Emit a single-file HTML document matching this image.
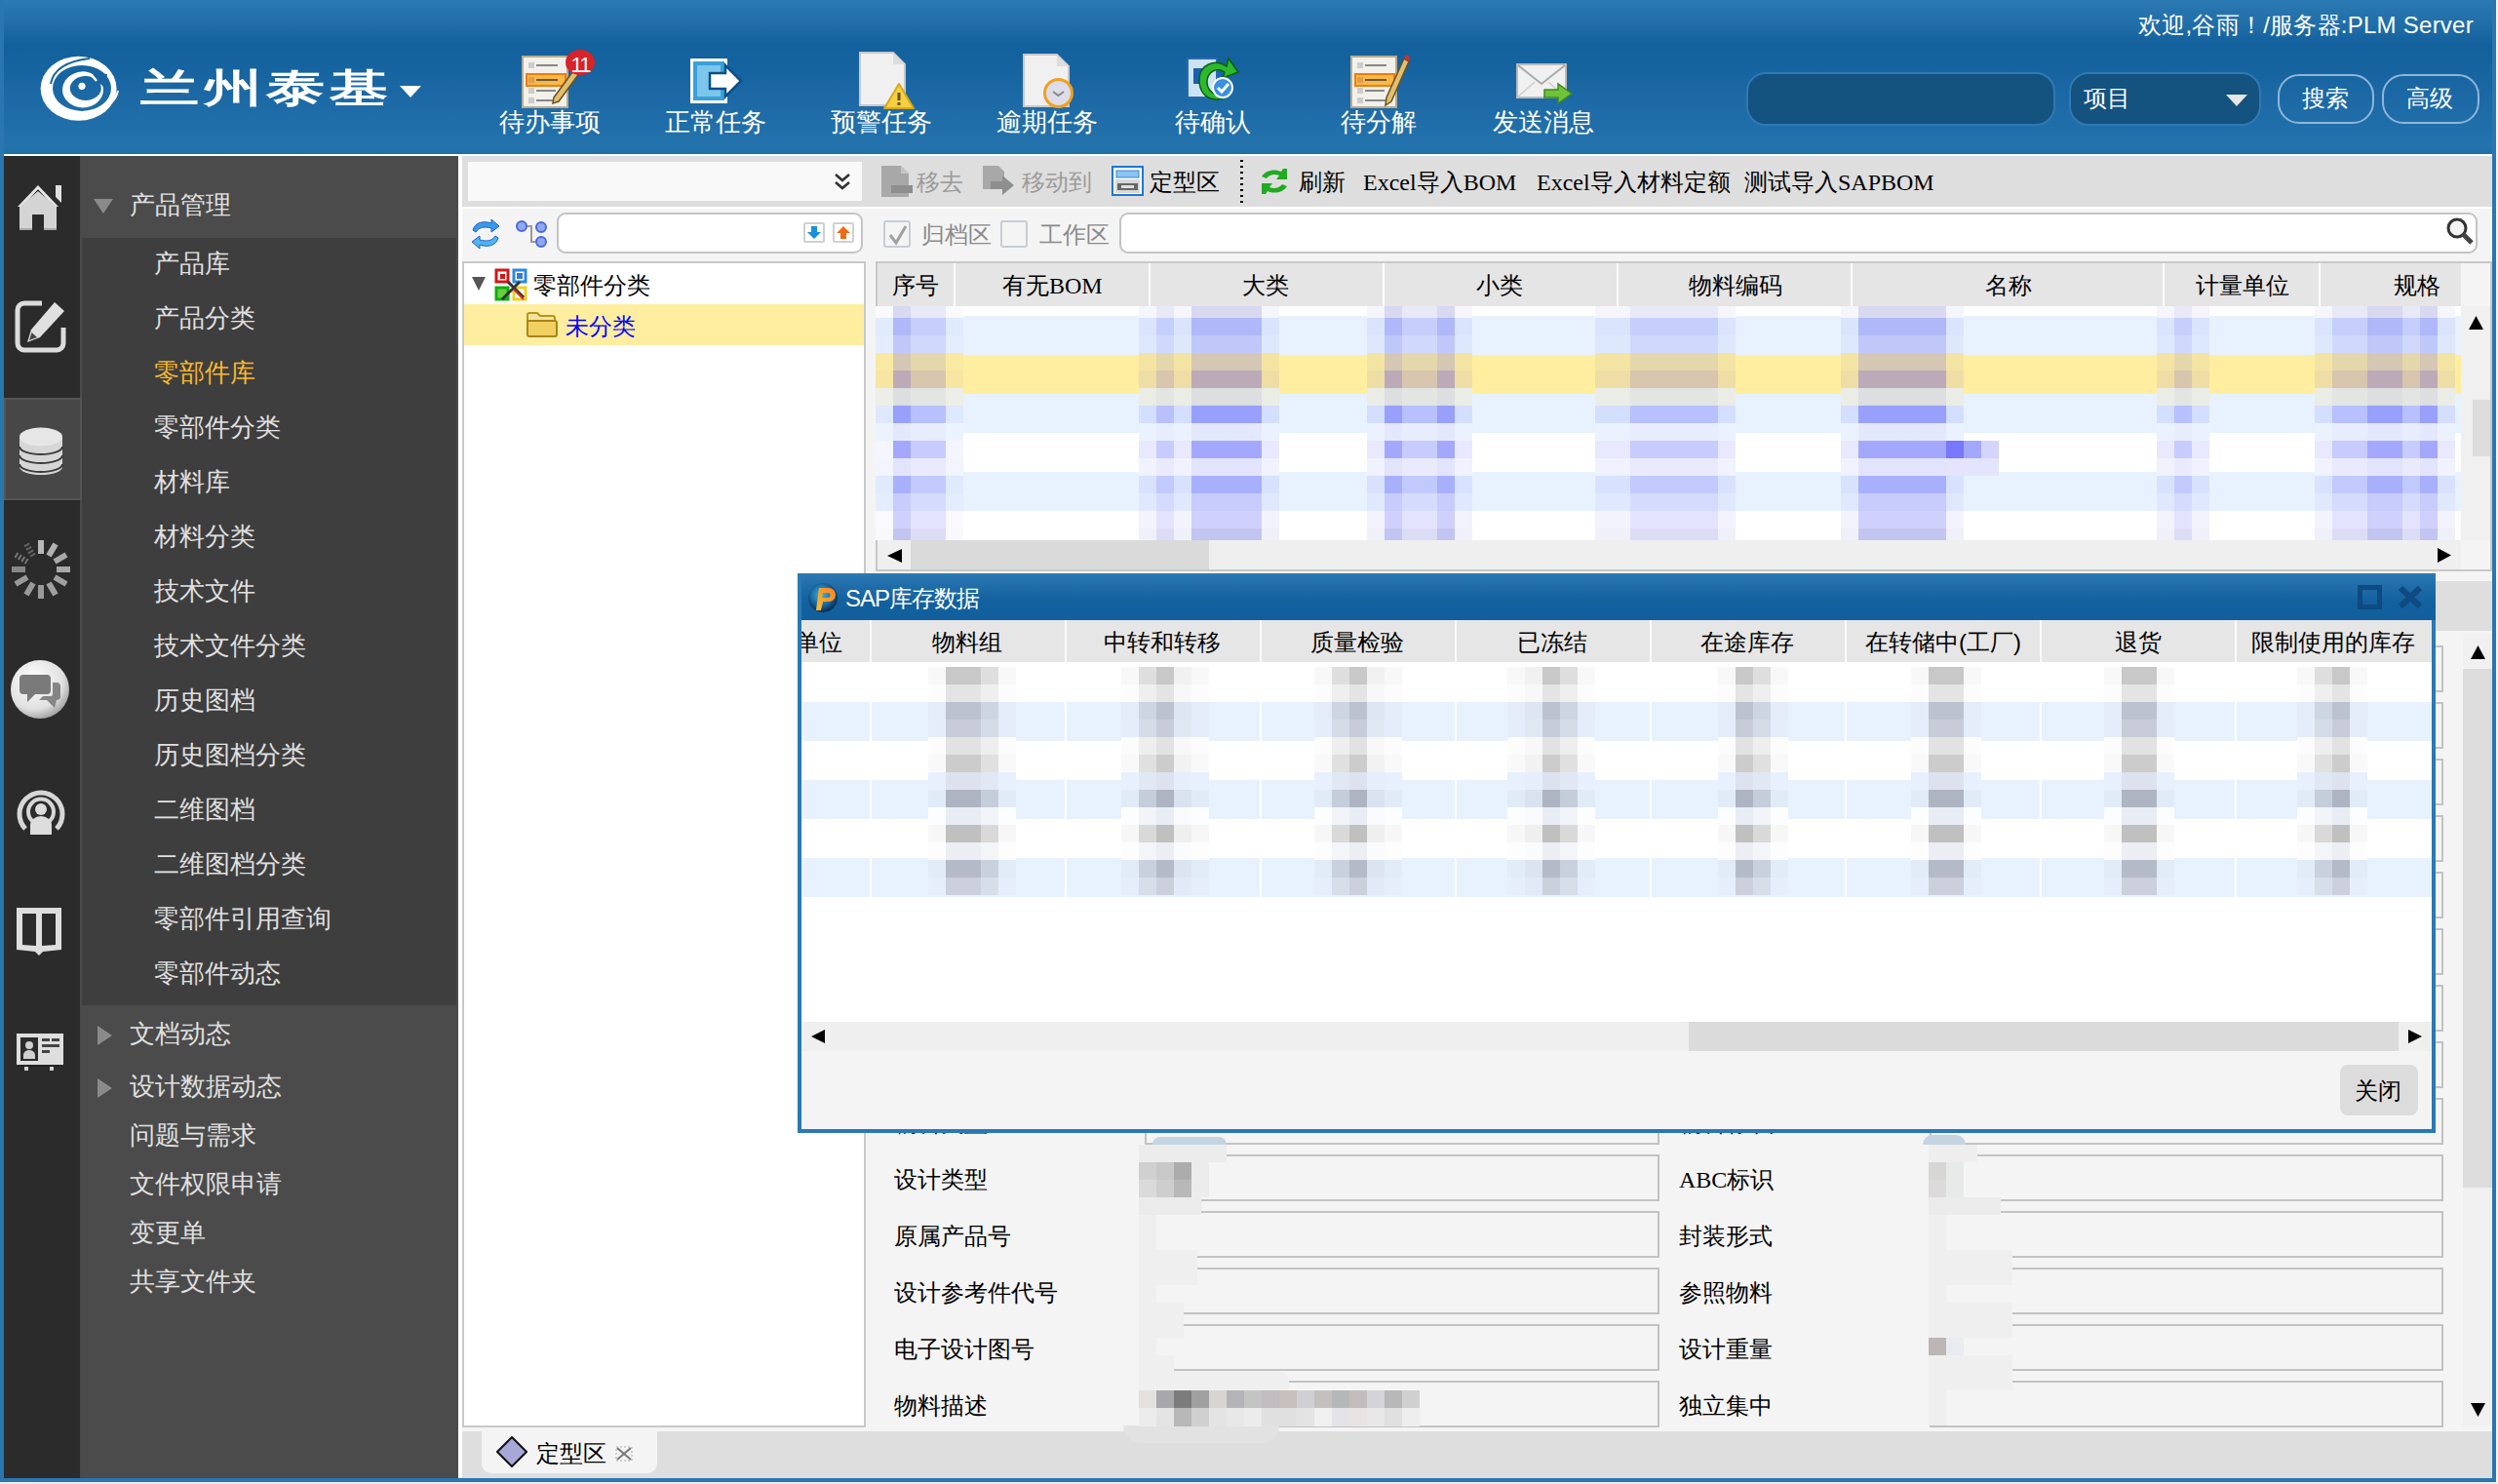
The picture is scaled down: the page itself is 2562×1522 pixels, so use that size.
<!DOCTYPE html>
<html><head><meta charset="utf-8">
<style>
*{box-sizing:border-box;margin:0;padding:0}
html,body{width:2562px;height:1522px;overflow:hidden;background:#2a76b0}
body{font-family:"Liberation Sans",sans-serif;position:relative}
.a{position:absolute}
.t{position:absolute;white-space:nowrap;line-height:1}
/* header */
#hdr{left:4px;top:0;width:2552px;height:158px;background:linear-gradient(#2b79b2 0px,#1f6ca7 28px,#12609c 46px,#14629e 62px,#1c69a5 100px,#2473ad 150px,#1f6fa9 157px)}
.hl{color:#fff;font-size:26px}
/* sidebar */
#icol{left:4px;top:160px;width:78px;height:1356px;background:#2b2b2b}
#icdiv{left:82px;top:160px;width:2px;height:1356px;background:#4a4a4a}
#menu{left:84px;top:160px;width:386px;height:1356px;background:#4b4b4b}
.mi{color:#e0e0e0;font-size:26px}
.tb{font-size:24px;margin-top:1px}
.tg{font-size:24px;color:#000;margin-top:1px}
</style></head><body>
<div id="hdr" class="a"></div>
<div class="a" style="left:4px;top:158px;width:2552px;height:2px;background:#fff"></div>
<div class="a" style="left:0;top:0;width:4px;height:1520px;background:#2a76b0"></div>
<div class="a" style="left:2556px;top:0;width:4px;height:1522px;background:#2a76b0"></div>
<div class="a" style="left:0;top:1516px;width:2562px;height:4px;background:#2a76b0"></div>
<div class="a" style="left:0;top:1520px;width:2562px;height:2px;background:#f2f0ec"></div>
<div class="a" style="left:2560px;top:0;width:2px;height:1520px;background:#f4f4f4"></div>


<!-- header content -->
<svg class="a" style="left:36px;top:52px" width="92" height="76" viewBox="36 52 92 76">
 <path fill-rule="evenodd" fill="#fff" d="M41.6 90.8 A39 33 0 1 0 119.6 90.8 A39 33 0 1 0 41.6 90.8 Z M54 90.4 A30 23.5 0 1 0 114 90.4 A30 23.5 0 1 0 54 90.4 Z"/>
 <path fill="none" stroke="#1864a0" stroke-width="2" d="M52 86 Q56 64 92 60"/>
 <path fill="none" stroke="#fff" stroke-width="2" d="M121 93 Q118 108 100 112"/>
 <path fill-rule="evenodd" fill="#fff" d="M64 92 A21 18.5 0 1 0 106 92 A21 18.5 0 1 0 64 92 Z M71.8 90.5 A16 12.5 0 1 0 103.8 90.5 A16 12.5 0 1 0 71.8 90.5 Z"/>
 <path fill="#1864a0" d="M94 74 L110 76 L108 90 L100 84 Z"/>
 <path fill="none" stroke="#fff" stroke-width="2.2" d="M76 77 Q90 70 99 83"/>
 <circle cx="84" cy="88.3" r="3.6" fill="#fff"/>
</svg>
<div class="t" style="left:144px;top:70px;color:#fff;font-size:40px;font-weight:bold;transform:scaleX(1.5);transform-origin:0 0;letter-spacing:3px">兰州泰基</div>
<svg class="a" style="left:410px;top:88px" width="22" height="12"><path d="M0 0H22L11 12Z" fill="#fff"/></svg>

<!-- toolbar icons -->
<svg class="a" style="left:534px;top:48px" width="80" height="64" viewBox="0 0 80 64">
 <rect x="2" y="10" width="46" height="52" fill="#f2f0ea" stroke="#b9ab8c" stroke-width="2"/>
 <rect x="8" y="16" width="6" height="6" fill="#ccc"/><rect x="16" y="18" width="22" height="2" fill="#888"/>
 <rect x="6" y="28" width="40" height="12" fill="#f9b84a" stroke="#f07d0a" stroke-width="2"/>
 <rect x="8" y="31" width="6" height="6" fill="#d9a050"/><rect x="16" y="33" width="22" height="2" fill="#6b5a3a"/>
 <rect x="8" y="42" width="6" height="6" fill="#ccc"/><rect x="16" y="44" width="20" height="2" fill="#888"/>
 <rect x="8" y="52" width="6" height="6" fill="#ccc"/><rect x="16" y="54" width="22" height="2" fill="#888"/>
 <path d="M34 52 L56 22 L61 26 L39 56 L33 58 Z" fill="#e0c070" stroke="#6b5020" stroke-width="1.5"/>
 <ellipse cx="61" cy="16" rx="15" ry="13" fill="#d8232a"/>
 <text x="61" y="26" font-family="Liberation Sans" font-size="22" fill="#fff" text-anchor="middle" letter-spacing="-2">11</text>
</svg>
<svg class="a" style="left:706px;top:58px" width="58" height="50" viewBox="0 0 58 50">
 <rect x="2" y="2" width="38" height="46" fill="#fff"/>
 <rect x="5" y="5" width="32" height="40" fill="#39a0d8"/>
 <rect x="9" y="9" width="24" height="32" fill="#7cc6ec"/>
 <path d="M22 17 H38 V9 L54 25 L38 41 V33 H22 Z" fill="#fff" stroke="#0a4f8a" stroke-width="2.5"/>
</svg>
<svg class="a" style="left:880px;top:52px" width="60" height="62" viewBox="0 0 60 62">
 <path d="M2 2 H36 L48 14 V56 H2 Z" fill="#f0f0f0" stroke="#c8c8c8" stroke-width="2"/>
 <path d="M36 2 V14 H48 Z" fill="#dcdcdc"/>
 <path d="M42 34 L57 59 H27 Z" fill="#f5d040" stroke="#d8a818" stroke-width="2" stroke-linejoin="round"/>
 <rect x="40.5" y="43" width="3" height="8" fill="#6a5010"/><rect x="40.5" y="53" width="3" height="3" fill="#6a5010"/>
</svg>
<svg class="a" style="left:1048px;top:54px" width="58" height="60" viewBox="0 0 58 60">
 <path d="M2 2 H36 L48 14 V55 H2 Z" fill="#f0f0f0" stroke="#c8c8c8" stroke-width="2"/>
 <path d="M36 2 V14 H48 Z" fill="#dcdcdc"/>
 <circle cx="37.5" cy="41.5" r="14" fill="#dcdde8" stroke="#f0a020" stroke-width="3"/>
 <path d="M32 40 L37.5 44 L43 40" fill="none" stroke="#888" stroke-width="2"/>
</svg>
<svg class="a" style="left:1216px;top:56px" width="56" height="54" viewBox="0 0 56 54">
 <rect x="2" y="4" width="30" height="40" fill="#cde3f5" stroke="#2a6bb0" stroke-width="2"/>
 <rect x="8" y="14" width="12" height="16" fill="#1a5fb0"/>
 <path d="M14 26 C14 10 30 4 42 12 L44 4 L54 18 L38 24 L40 18 C32 12 22 18 22 28 C22 40 36 46 46 38 C40 50 14 50 14 26 Z" fill="#2db82d" stroke="#0a6010" stroke-width="1.5"/>
 <circle cx="38" cy="34" r="10" fill="#3a8fe0" stroke="#fff" stroke-width="2"/>
 <path d="M33 34 L37 38 L44 30" fill="none" stroke="#fff" stroke-width="3"/>
</svg>
<svg class="a" style="left:1382px;top:52px" width="66" height="60" viewBox="0 0 66 60">
 <rect x="4" y="6" width="46" height="52" fill="#f2f0ea" stroke="#b9ab8c" stroke-width="2"/>
 <rect x="10" y="12" width="6" height="6" fill="#ccc"/><rect x="18" y="14" width="22" height="2" fill="#888"/>
 <rect x="8" y="24" width="40" height="12" fill="#f9b84a" stroke="#f07d0a" stroke-width="2"/>
 <rect x="10" y="27" width="6" height="6" fill="#d9a050"/><rect x="18" y="29" width="22" height="2" fill="#6b5a3a"/>
 <rect x="10" y="38" width="6" height="6" fill="#ccc"/><rect x="18" y="40" width="20" height="2" fill="#888"/>
 <rect x="10" y="48" width="6" height="6" fill="#ccc"/><rect x="18" y="50" width="22" height="2" fill="#888"/>
 <path d="M40 48 L58 8 L63 11 L45 52 L39 56 Z" fill="#e0c070" stroke="#6b5020" stroke-width="1.5"/>
 <path d="M58 8 L63 11 L64 6 L60 4 Z" fill="#d03030"/>
</svg>
<svg class="a" style="left:1554px;top:62px" width="60" height="48" viewBox="0 0 60 48">
 <rect x="2" y="4" width="50" height="34" fill="#f0f0f0" stroke="#bbb" stroke-width="2"/>
 <path d="M3 5 L27 24 L51 5" fill="none" stroke="#aaa" stroke-width="2"/>
 <path d="M3 37 L20 22 M51 37 L34 22" fill="none" stroke="#ccc" stroke-width="1.5"/>
 <path d="M30 30 H44 V24 L58 34 L44 44 V38 H30 Z" fill="#6ec23a" stroke="#3c8a18" stroke-width="1.5"/>
</svg>
<div class="t hl" style="left:512px;top:112px">待办事项</div>
<div class="t hl" style="left:682px;top:112px">正常任务</div>
<div class="t hl" style="left:852px;top:112px">预警任务</div>
<div class="t hl" style="left:1022px;top:112px">逾期任务</div>
<div class="t hl" style="left:1205px;top:112px">待确认</div>
<div class="t hl" style="left:1375px;top:112px">待分解</div>
<div class="t hl" style="left:1531px;top:112px">发送消息</div>

<div class="t" style="left:2193px;top:14px;color:#fff;font-size:24px;letter-spacing:0.25px">欢迎,谷雨！/服务器:PLM Server</div>
<div class="a" style="left:1791px;top:74px;width:317px;height:55px;border-radius:20px;background:#14527f;border:2px solid #2f7ab5"></div>
<div class="a" style="left:2122px;top:74px;width:197px;height:55px;border-radius:20px;background:#14527f;border:2px solid #2f7ab5"></div>
<div class="t hl" style="left:2137px;top:89px;font-size:24px">项目</div>
<svg class="a" style="left:2283px;top:97px" width="22" height="12"><path d="M0 0H22L11 12Z" fill="#e6e6e6"/></svg>
<div class="a" style="left:2336px;top:76px;width:99px;height:51px;border-radius:22px;border:2px solid #8fb6d8"></div>
<div class="a" style="left:2443px;top:76px;width:100px;height:51px;border-radius:22px;border:2px solid #8fb6d8"></div>
<div class="t hl" style="left:2361px;top:89px;font-size:24px">搜索</div>
<div class="t hl" style="left:2468px;top:89px;font-size:24px">高级</div>

<!-- sidebar -->
<div id="icol" class="a"></div>
<div id="icdiv" class="a"></div>
<div id="menu" class="a"></div>
<div class="a" style="left:84px;top:244px;width:384px;height:787px;background:#3e3e3e"></div>
<div class="a" style="left:4px;top:408px;width:80px;height:105px;background:#474747;border:2px solid #555"></div>


<!-- sidebar icons -->
<svg class="a" style="left:14px;top:184px" width="54" height="56" viewBox="0 0 54 56">
 <path d="M4 28 L25 6 L46 28 Z" fill="#e6e6e6"/>
 <path d="M10 28 L25 12 L40 28" fill="none" stroke="#1a1a1a" stroke-width="2.5"/>
 <path d="M43 6 H49 V24 L43 18 Z" fill="#e0e0e0"/>
 <path d="M6 28 L25 12 L44 28 V52 H31 V36 H19 V52 H6 Z" fill="#d4d4d4"/>
 <path d="M6 50 H19 V52 H6 Z M31 50 H44 V52 H31 Z" fill="#aaa"/>
</svg>
<svg class="a" style="left:15px;top:306px" width="54" height="56" viewBox="0 0 54 56">
 <path d="M28 5 H10 A7 7 0 0 0 3 12 V46 A7 7 0 0 0 10 53 H43 A7 7 0 0 0 50 46 V30" fill="none" stroke="#dcdcdc" stroke-width="5"/>
 <path d="M41 4 L51 13 L26 40 L13 45 L17 32 Z" fill="#e0e0e0"/>
 <path d="M15 43 L17.5 35 L23 40 Z" fill="#444"/>
</svg>
<svg class="a" style="left:17px;top:436px" width="50" height="54" viewBox="0 0 50 54">
 <path d="M3 12 V43 A22 8 0 0 0 47 43 V12 Z" fill="#d6d6d6"/>
 <path d="M3 22 A22 8 0 0 0 47 22 M3 31 A22 8 0 0 0 47 31 M3 40 A22 8 0 0 0 47 40" fill="none" stroke="#3c3c3c" stroke-width="2"/>
 <ellipse cx="25" cy="12" rx="22" ry="9.5" fill="#e6e6e6"/>
</svg>
<svg class="a" style="left:8px;top:550px" width="68" height="68" viewBox="0 0 68 68">
 <g stroke-width="6" stroke-linecap="butt">
 <line x1="34" y1="4" x2="34" y2="18" stroke="#b8b8b8"/>
 <line x1="49" y1="8" x2="42" y2="20" stroke="#b0b0b0"/>
 <line x1="60" y1="19" x2="48" y2="26" stroke="#a8a8a8"/>
 <line x1="64" y1="34" x2="50" y2="34" stroke="#a8a8a8"/>
 <line x1="60" y1="49" x2="48" y2="42" stroke="#a0a0a0"/>
 <line x1="49" y1="60" x2="42" y2="48" stroke="#a0a0a0"/>
 <line x1="34" y1="64" x2="34" y2="50" stroke="#999"/>
 <line x1="19" y1="60" x2="26" y2="48" stroke="#999"/>
 <line x1="8" y1="49" x2="20" y2="42" stroke="#999"/>
 <line x1="4" y1="34" x2="18" y2="34" stroke="#888"/>
 <line x1="8" y1="19" x2="20" y2="26" stroke="#777" stroke-dasharray="2 2"/>
 <line x1="19" y1="8" x2="26" y2="20" stroke="#666" stroke-dasharray="2 2"/>
 </g>
</svg>
<svg class="a" style="left:10px;top:676px" width="62" height="62" viewBox="0 0 62 62">
 <defs><radialGradient id="cg" cx="0.4" cy="0.35" r="0.7"><stop offset="0" stop-color="#fff"/><stop offset="0.7" stop-color="#e0e0e0"/><stop offset="1" stop-color="#9a9a9a"/></radialGradient></defs>
 <circle cx="31" cy="31" r="30" fill="url(#cg)"/>
 <path d="M14 16 H38 A4 4 0 0 1 42 20 V32 A4 4 0 0 1 38 36 H26 L18 44 V36 H14 A4 4 0 0 1 10 32 V20 A4 4 0 0 1 14 16 Z" fill="#7a7a7a"/>
 <path d="M44 24 H48 A4 4 0 0 1 52 28 V38 A4 4 0 0 1 48 42 L46 50 L38 42 H30 L34 38 H42 A2 2 0 0 0 44 36 Z" fill="#858585"/>
</svg>
<svg class="a" style="left:16px;top:806px" width="52" height="52" viewBox="0 0 52 52">
 <path d="M10 44 A22 22 0 1 1 42 44" fill="none" stroke="#d6d6d6" stroke-width="5"/>
 <path d="M17 36 A13 13 0 1 1 35 36" fill="none" stroke="#d6d6d6" stroke-width="4"/>
 <circle cx="26" cy="24" r="6" fill="#dcdcdc"/>
 <path d="M15 50 V40 A11 9 0 0 1 37 40 V50 Z" fill="#dcdcdc"/>
</svg>
<svg class="a" style="left:15px;top:928px" width="52" height="54" viewBox="0 0 52 54">
 <path d="M2 3 H48 V46 L29 48 L25 52 L21 48 L2 46 Z" fill="#dedede"/>
 <path d="M8 9 H22 V42 L8 41 Z M28 9 H42 V41 L28 42 Z" fill="#2b2b2b"/>
</svg>
<svg class="a" style="left:15px;top:1058px" width="52" height="42" viewBox="0 0 52 42">
 <rect x="2" y="2" width="48" height="32" fill="#dedede"/>
 <rect x="6" y="6" width="18" height="24" fill="#2b2b2b"/>
 <circle cx="15" cy="14" r="4" fill="#cfcfcf"/><path d="M9 28 V24 A6 5 0 0 1 21 24 V28 Z" fill="#cfcfcf"/>
 <rect x="28" y="7" width="8" height="3" fill="#444"/><rect x="38" y="7" width="8" height="3" fill="#444"/>
 <rect x="28" y="13" width="18" height="3" fill="#444"/><rect x="28" y="19" width="8" height="3" fill="#444"/>
 <rect x="10" y="34" width="4" height="6" fill="#d0d0d0"/><rect x="36" y="34" width="4" height="6" fill="#d0d0d0"/>
 <rect x="6" y="34" width="40" height="2" fill="#222"/>
</svg>

<!-- menu -->
<svg class="a" style="left:96px;top:204px" width="20" height="15"><path d="M0 0H20L10 15Z" fill="#8a8a8a"/></svg>
<div class="t mi" style="left:133px;top:197px">产品管理</div>
<div class="t mi" style="left:158px;top:257px">产品库</div>
<div class="t mi" style="left:158px;top:313px">产品分类</div>
<div class="t mi" style="left:158px;top:369px;color:#f9b92e">零部件库</div>
<div class="t mi" style="left:158px;top:425px">零部件分类</div>
<div class="t mi" style="left:158px;top:481px">材料库</div>
<div class="t mi" style="left:158px;top:537px">材料分类</div>
<div class="t mi" style="left:158px;top:593px">技术文件</div>
<div class="t mi" style="left:158px;top:649px">技术文件分类</div>
<div class="t mi" style="left:158px;top:705px">历史图档</div>
<div class="t mi" style="left:158px;top:761px">历史图档分类</div>
<div class="t mi" style="left:158px;top:817px">二维图档</div>
<div class="t mi" style="left:158px;top:873px">二维图档分类</div>
<div class="t mi" style="left:158px;top:929px">零部件引用查询</div>
<div class="t mi" style="left:158px;top:985px">零部件动态</div>
<svg class="a" style="left:100px;top:1052px" width="15" height="20"><path d="M0 0V20L15 10Z" fill="#8a8a8a"/></svg>
<div class="t mi" style="left:133px;top:1047px">文档动态</div>
<svg class="a" style="left:100px;top:1106px" width="15" height="20"><path d="M0 0V20L15 10Z" fill="#8a8a8a"/></svg>
<div class="t mi" style="left:133px;top:1101px">设计数据动态</div>
<div class="t mi" style="left:133px;top:1151px">问题与需求</div>
<div class="t mi" style="left:133px;top:1201px">文件权限申请</div>
<div class="t mi" style="left:133px;top:1251px">变更单</div>
<div class="t mi" style="left:133px;top:1301px">共享文件夹</div>

<!-- content -->
<div class="a" style="left:470px;top:160px;width:4px;height:1356px;background:#fff"></div>
<div class="a" style="left:474px;top:160px;width:2082px;height:52px;background:#dedede"></div>
<div class="a" style="left:474px;top:212px;width:2082px;height:2px;background:#fff"></div>
<div class="a" style="left:474px;top:214px;width:2082px;height:1254px;background:#f4f4f4"></div>
<div class="a" style="left:474px;top:1468px;width:2082px;height:48px;background:#dedede"></div>

<!-- toolbar row1 -->
<div class="a" style="left:480px;top:166px;width:404px;height:40px;background:#f9f9f9"></div>
<svg class="a" style="left:854px;top:176px" width="20" height="20" viewBox="0 0 20 20"><path d="M3 3 L10 9 L17 3 M3 11 L10 17 L17 11" fill="none" stroke="#333" stroke-width="2.6"/></svg>
<svg class="a" style="left:902px;top:168px" width="34" height="36" viewBox="0 0 34 36">
 <path d="M2 2 H22 L30 10 V34 H2 Z" fill="#a8a8a8"/><path d="M22 2 V10 H30" fill="#c4c4c4"/>
 <rect x="12" y="22" width="22" height="8" fill="#8e8e8e"/>
</svg>
<div class="t tb" style="left:940px;top:174px;color:#9a9a9a">移去</div>
<svg class="a" style="left:1006px;top:168px" width="36" height="36" viewBox="0 0 36 36">
 <path d="M2 2 H18 L24 8 V26 H2 Z" fill="#a8a8a8"/>
 <path d="M10 18 H22 V12 L34 22 L22 32 V26 H10 Z" fill="#8e8e8e"/>
</svg>
<div class="t tb" style="left:1048px;top:174px;color:#9a9a9a">移动到</div>
<svg class="a" style="left:1140px;top:170px" width="33" height="31" viewBox="0 0 33 31">
 <rect x="1" y="1" width="31" height="29" fill="#fff" stroke="#1e78d0" stroke-width="2"/>
 <rect x="5" y="5" width="23" height="7" fill="#8cc4f0" stroke="#3a8ad0" stroke-width="1"/>
 <rect x="4" y="14" width="25" height="14" fill="#d8d8d8"/>
 <rect x="6" y="18" width="21" height="7" fill="#666"/><rect x="10" y="20" width="13" height="3" fill="#ddd"/>
</svg>
<div class="t tb" style="left:1179px;top:174px;color:#000">定型区</div>
<div class="a" style="left:1272px;top:164px;width:3px;height:44px;background:repeating-linear-gradient(#000 0 2px,transparent 2px 6px)"></div>
<svg class="a" style="left:1292px;top:172px" width="30" height="28" viewBox="0 0 30 28">
 <path d="M2 9 C6 2 16 1 22 4 L24 1 L28 1 V12 H17 L20 8 C15 6 10 7 7 11 Z" fill="#22aa22"/>
 <path d="M28 19 C24 26 14 27 8 24 L6 27 L2 27 V16 H13 L10 20 C15 22 20 21 23 17 Z" fill="#22aa22"/>
</svg>
<div class="t tb" style="left:1332px;top:174px;color:#000">刷新</div>
<div class="t tb" style="left:1398px;top:174px;color:#000;font-family:'Liberation Serif',serif">Excel导入BOM</div>
<div class="t tb" style="left:1576px;top:174px;color:#000;font-family:'Liberation Serif',serif">Excel导入材料定额</div>
<div class="t tb" style="left:1789px;top:174px;color:#000;font-family:'Liberation Serif',serif">测试导入SAPBOM</div>

<!-- toolbar row2 -->
<svg class="a" style="left:482px;top:222px" width="32" height="36" viewBox="0 0 32 36">
 <path d="M3 14 C5 6 14 4 22 7 L22 3 L30 10 L22 16 L22 12 C15 10 9 11 6 16 Z" fill="#3a9ae8" stroke="#2060d0" stroke-width="1"/>
 <path d="M29 22 C27 30 18 32 10 29 L10 33 L2 26 L10 20 L10 24 C17 26 23 25 26 20 Z" fill="#50b4ea" stroke="#2060d0" stroke-width="1"/>
</svg>
<svg class="a" style="left:528px;top:225px" width="34" height="32" viewBox="0 0 34 32">
 <path d="M8 7 H17 V23 H26" fill="none" stroke="#999" stroke-width="2"/>
 <circle cx="7" cy="7" r="5" fill="#8fa8f0" stroke="#4a6ad8" stroke-width="2"/>
 <circle cx="27" cy="8" r="5" fill="#8fa8f0" stroke="#4a6ad8" stroke-width="2"/>
 <circle cx="27" cy="23" r="5" fill="#8fa8f0" stroke="#4a6ad8" stroke-width="2"/>
</svg>
<div class="a" style="left:571px;top:218px;width:314px;height:42px;border:2px solid #c4c4c4;border-radius:9px;background:#fff"></div>
<div class="a" style="left:824px;top:228px;width:22px;height:21px;border:2px solid #d0d0d0;border-radius:2px;background:#fff"></div>
<svg class="a" style="left:826px;top:230px" width="18" height="17" viewBox="0 0 18 17"><path d="M6 2 H12 V8 H16 L9 15 L2 8 H6 Z" fill="#1a8ed8"/></svg>
<div class="a" style="left:854px;top:228px;width:22px;height:21px;border:2px solid #d0d0d0;border-radius:2px;background:#fff"></div>
<svg class="a" style="left:856px;top:230px" width="18" height="17" viewBox="0 0 18 17"><path d="M6 15 H12 V9 H16 L9 2 L2 9 H6 Z" fill="#f06a10"/></svg>
<div class="a" style="left:906px;top:226px;width:28px;height:28px;border:2px solid #c8ccd4;border-radius:3px;background:#f4f4f4"></div>
<svg class="a" style="left:910px;top:230px" width="22" height="22" viewBox="0 0 22 22"><path d="M3 11 L9 19 L19 2" fill="none" stroke="#a0a0a0" stroke-width="3"/></svg>
<div class="t tb" style="left:945px;top:228px;color:#8a8a8a">归档区</div>
<div class="a" style="left:1026px;top:226px;width:28px;height:28px;border:2px solid #c8ccd4;border-radius:3px;background:#f4f4f4"></div>
<div class="t tb" style="left:1066px;top:228px;color:#8a8a8a">工作区</div>
<div class="a" style="left:1148px;top:218px;width:1393px;height:42px;border:2px solid #c4c4c4;border-radius:9px;background:#fff"></div>
<svg class="a" style="left:2507px;top:221px" width="32" height="32" viewBox="0 0 32 32">
 <circle cx="13" cy="13" r="9" fill="#f4f4f4" stroke="#333" stroke-width="3"/>
 <path d="M19 19 L28 28" stroke="#444" stroke-width="5"/>
</svg>

<!-- tree panel -->
<div class="a" style="left:474px;top:268px;width:414px;height:1196px;border:2px solid #c8c8c8;background:#fff"></div>
<svg class="a" style="left:484px;top:284px" width="14" height="14"><path d="M0 0H14L7 14Z" fill="#555"/></svg>
<svg class="a" style="left:507px;top:275px" width="34" height="34" viewBox="0 0 34 34">
 <rect x="2" y="2" width="12" height="12" fill="#fff" stroke="#d01818" stroke-width="3"/><rect x="6" y="6" width="5" height="5" fill="#d01818"/>
 <rect x="20" y="2" width="12" height="12" fill="#fff" stroke="#2a8ae0" stroke-width="3"/><rect x="23" y="5" width="6" height="6" fill="#3a7ad0"/>
 <rect x="2" y="20" width="12" height="12" fill="#6ad040" stroke="#10b010" stroke-width="3"/>
 <rect x="20" y="20" width="12" height="12" fill="#fff" stroke="#f0d020" stroke-width="3"/>
 <path d="M8 32 L26 14 M14 14 L30 30" stroke="#333" stroke-width="3"/><path d="M20 22 L30 32" stroke="#e03030" stroke-width="2"/>
</svg>
<div class="t tg" style="left:547px;top:280px">零部件分类</div>
<div class="a" style="left:476px;top:312px;width:410px;height:42px;background:#ffeea0"></div>
<svg class="a" style="left:539px;top:319px" width="34" height="28" viewBox="0 0 34 28">
 <path d="M2 4 A2 2 0 0 1 4 2 H12 L15 5 H28 A2 2 0 0 1 30 7 V10 H2 Z" fill="#f4e3a0" stroke="#b8941c" stroke-width="2"/>
 <path d="M2 10 H30 A2 2 0 0 1 32 12 V24 A2 2 0 0 1 30 26 H4 A2 2 0 0 1 2 24 Z" fill="#f0d060" stroke="#a88418" stroke-width="2"/>
</svg>
<div class="t tg" style="left:580px;top:322px;color:#0000ff">未分类</div>

<!-- grid -->
<div class="a" style="left:898px;top:268px;width:1658px;height:318px;border:2px solid #c8c8c8;background:#fff"></div>
<div class="a" style="left:900px;top:270px;width:1624px;height:44px;background:#e5e5e5"></div>
<div class="a" style="left:2524px;top:270px;width:30px;height:44px;background:#f4f4f4"></div>
<div class="a" style="left:900px;top:314px;width:1624px;height:10px;background:#fff"></div>
<div class="a" style="left:900px;top:324px;width:1624px;height:40px;background:#e8f2fe"></div>
<div class="a" style="left:900px;top:364px;width:1624px;height:40px;background:#ffee9f"></div>
<div class="a" style="left:900px;top:404px;width:1624px;height:40px;background:#e8f2fe"></div>
<div class="a" style="left:900px;top:444px;width:1624px;height:40px;background:#fff"></div>
<div class="a" style="left:900px;top:484px;width:1624px;height:40px;background:#e8f2fe"></div>
<div class="a" style="left:900px;top:524px;width:1624px;height:30px;background:#fff"></div>
<div class="a" style="left:978px;top:270px;width:2px;height:44px;background:#fff"></div>
<div class="a" style="left:978px;top:324px;width:2px;height:40px;background:#fff"></div>
<div class="a" style="left:978px;top:404px;width:2px;height:40px;background:#fff"></div>
<div class="a" style="left:978px;top:484px;width:2px;height:40px;background:#fff"></div>
<div class="a" style="left:1178px;top:270px;width:2px;height:44px;background:#fff"></div>
<div class="a" style="left:1178px;top:324px;width:2px;height:40px;background:#fff"></div>
<div class="a" style="left:1178px;top:404px;width:2px;height:40px;background:#fff"></div>
<div class="a" style="left:1178px;top:484px;width:2px;height:40px;background:#fff"></div>
<div class="a" style="left:1418px;top:270px;width:2px;height:44px;background:#fff"></div>
<div class="a" style="left:1418px;top:324px;width:2px;height:40px;background:#fff"></div>
<div class="a" style="left:1418px;top:404px;width:2px;height:40px;background:#fff"></div>
<div class="a" style="left:1418px;top:484px;width:2px;height:40px;background:#fff"></div>
<div class="a" style="left:1658px;top:270px;width:2px;height:44px;background:#fff"></div>
<div class="a" style="left:1658px;top:324px;width:2px;height:40px;background:#fff"></div>
<div class="a" style="left:1658px;top:404px;width:2px;height:40px;background:#fff"></div>
<div class="a" style="left:1658px;top:484px;width:2px;height:40px;background:#fff"></div>
<div class="a" style="left:1898px;top:270px;width:2px;height:44px;background:#fff"></div>
<div class="a" style="left:1898px;top:324px;width:2px;height:40px;background:#fff"></div>
<div class="a" style="left:1898px;top:404px;width:2px;height:40px;background:#fff"></div>
<div class="a" style="left:1898px;top:484px;width:2px;height:40px;background:#fff"></div>
<div class="a" style="left:2218px;top:270px;width:2px;height:44px;background:#fff"></div>
<div class="a" style="left:2218px;top:324px;width:2px;height:40px;background:#fff"></div>
<div class="a" style="left:2218px;top:404px;width:2px;height:40px;background:#fff"></div>
<div class="a" style="left:2218px;top:484px;width:2px;height:40px;background:#fff"></div>
<div class="a" style="left:2378px;top:270px;width:2px;height:44px;background:#fff"></div>
<div class="a" style="left:2378px;top:324px;width:2px;height:40px;background:#fff"></div>
<div class="a" style="left:2378px;top:404px;width:2px;height:40px;background:#fff"></div>
<div class="a" style="left:2378px;top:484px;width:2px;height:40px;background:#fff"></div>
<div class="t tg" style="left:915px;top:280px">序号</div>
<div class="t tg" style="left:1028px;top:280px">有无<span style="font-family:'Liberation Serif',serif">BOM</span></div>
<div class="t tg" style="left:1274px;top:280px">大类</div>
<div class="t tg" style="left:1514px;top:280px">小类</div>
<div class="t tg" style="left:1732px;top:280px">物料编码</div>
<div class="t tg" style="left:2036px;top:280px">名称</div>
<div class="t tg" style="left:2252px;top:280px">计量单位</div>
<div class="t tg" style="left:2455px;top:280px">规格</div>
<!--GB-->
<div class="a" style="left:898px;top:326px;width:18px;height:18px;background:#e1ebfe"></div>
<div class="a" style="left:916px;top:326px;width:18px;height:18px;background:#b0b8fa"></div>
<div class="a" style="left:934px;top:326px;width:18px;height:18px;background:#c6cffc"></div>
<div class="a" style="left:952px;top:326px;width:18px;height:18px;background:#c6cffc"></div>
<div class="a" style="left:970px;top:326px;width:18px;height:18px;background:#e1ebfe"></div>
<div class="a" style="left:898px;top:344px;width:18px;height:18px;background:#e3edfe"></div>
<div class="a" style="left:916px;top:344px;width:18px;height:18px;background:#c0c8fa"></div>
<div class="a" style="left:934px;top:344px;width:18px;height:18px;background:#d0d9fc"></div>
<div class="a" style="left:952px;top:344px;width:18px;height:18px;background:#d0d9fc"></div>
<div class="a" style="left:970px;top:344px;width:18px;height:18px;background:#e3edfe"></div>
<div class="a" style="left:898px;top:362px;width:18px;height:18px;background:#fae9a2"></div>
<div class="a" style="left:916px;top:362px;width:18px;height:18px;background:#d4c8b4"></div>
<div class="a" style="left:934px;top:362px;width:18px;height:18px;background:#e5d7ac"></div>
<div class="a" style="left:952px;top:362px;width:18px;height:18px;background:#e5d7ac"></div>
<div class="a" style="left:970px;top:362px;width:18px;height:18px;background:#fae9a2"></div>
<div class="a" style="left:898px;top:380px;width:18px;height:18px;background:#f7e6a2"></div>
<div class="a" style="left:916px;top:380px;width:18px;height:18px;background:#bcaab8"></div>
<div class="a" style="left:934px;top:380px;width:18px;height:18px;background:#d7c5ae"></div>
<div class="a" style="left:952px;top:380px;width:18px;height:18px;background:#d7c5ae"></div>
<div class="a" style="left:970px;top:380px;width:18px;height:18px;background:#f7e6a2"></div>
<div class="a" style="left:898px;top:398px;width:18px;height:18px;background:#eceee7"></div>
<div class="a" style="left:916px;top:398px;width:18px;height:18px;background:#dcdee0"></div>
<div class="a" style="left:934px;top:398px;width:18px;height:18px;background:#e3e5e3"></div>
<div class="a" style="left:952px;top:398px;width:18px;height:18px;background:#e3e5e3"></div>
<div class="a" style="left:970px;top:398px;width:18px;height:18px;background:#eceee7"></div>
<div class="a" style="left:898px;top:416px;width:18px;height:18px;background:#dee8fe"></div>
<div class="a" style="left:916px;top:416px;width:18px;height:18px;background:#98a0fc"></div>
<div class="a" style="left:934px;top:416px;width:18px;height:18px;background:#b8c1fd"></div>
<div class="a" style="left:952px;top:416px;width:18px;height:18px;background:#b8c1fd"></div>
<div class="a" style="left:970px;top:416px;width:18px;height:18px;background:#dee8fe"></div>
<div class="a" style="left:898px;top:434px;width:18px;height:18px;background:#edf3fe"></div>
<div class="a" style="left:916px;top:434px;width:18px;height:18px;background:#e4e8fc"></div>
<div class="a" style="left:934px;top:434px;width:18px;height:18px;background:#e8edfd"></div>
<div class="a" style="left:952px;top:434px;width:18px;height:18px;background:#e8edfd"></div>
<div class="a" style="left:970px;top:434px;width:18px;height:18px;background:#edf3fe"></div>
<div class="a" style="left:898px;top:452px;width:18px;height:18px;background:#f4f5ff"></div>
<div class="a" style="left:916px;top:452px;width:18px;height:18px;background:#a4a8fc"></div>
<div class="a" style="left:934px;top:452px;width:18px;height:18px;background:#c8cbfd"></div>
<div class="a" style="left:952px;top:452px;width:18px;height:18px;background:#c8cbfd"></div>
<div class="a" style="left:970px;top:452px;width:18px;height:18px;background:#f4f5ff"></div>
<div class="a" style="left:898px;top:470px;width:18px;height:18px;background:#f2f4fe"></div>
<div class="a" style="left:916px;top:470px;width:18px;height:18px;background:#e2e4fc"></div>
<div class="a" style="left:934px;top:470px;width:18px;height:18px;background:#e9ebfd"></div>
<div class="a" style="left:952px;top:470px;width:18px;height:18px;background:#e9ebfd"></div>
<div class="a" style="left:970px;top:470px;width:18px;height:18px;background:#f2f4fe"></div>
<div class="a" style="left:898px;top:488px;width:18px;height:18px;background:#e0eafe"></div>
<div class="a" style="left:916px;top:488px;width:18px;height:18px;background:#a8b0fc"></div>
<div class="a" style="left:934px;top:488px;width:18px;height:18px;background:#c2cafd"></div>
<div class="a" style="left:952px;top:488px;width:18px;height:18px;background:#c2cafd"></div>
<div class="a" style="left:970px;top:488px;width:18px;height:18px;background:#e0eafe"></div>
<div class="a" style="left:898px;top:506px;width:18px;height:18px;background:#e4edfe"></div>
<div class="a" style="left:916px;top:506px;width:18px;height:18px;background:#c8ccfc"></div>
<div class="a" style="left:934px;top:506px;width:18px;height:18px;background:#d5dbfd"></div>
<div class="a" style="left:952px;top:506px;width:18px;height:18px;background:#d5dbfd"></div>
<div class="a" style="left:970px;top:506px;width:18px;height:18px;background:#e4edfe"></div>
<div class="a" style="left:898px;top:524px;width:18px;height:18px;background:#f9f9ff"></div>
<div class="a" style="left:916px;top:524px;width:18px;height:18px;background:#d0d0fc"></div>
<div class="a" style="left:934px;top:524px;width:18px;height:18px;background:#e3e3fd"></div>
<div class="a" style="left:952px;top:524px;width:18px;height:18px;background:#e3e3fd"></div>
<div class="a" style="left:970px;top:524px;width:18px;height:18px;background:#f9f9ff"></div>
<div class="a" style="left:1168px;top:326px;width:18px;height:18px;background:#dae4fd"></div>
<div class="a" style="left:1186px;top:326px;width:18px;height:18px;background:#c6cffc"></div>
<div class="a" style="left:1204px;top:326px;width:18px;height:18px;background:#dae4fd"></div>
<div class="a" style="left:1222px;top:326px;width:18px;height:18px;background:#b0b8fa"></div>
<div class="a" style="left:1240px;top:326px;width:18px;height:18px;background:#b0b8fa"></div>
<div class="a" style="left:1258px;top:326px;width:18px;height:18px;background:#b0b8fa"></div>
<div class="a" style="left:1276px;top:326px;width:18px;height:18px;background:#b0b8fa"></div>
<div class="a" style="left:1294px;top:326px;width:18px;height:18px;background:#dae4fd"></div>
<div class="a" style="left:1168px;top:344px;width:18px;height:18px;background:#dee8fd"></div>
<div class="a" style="left:1186px;top:344px;width:18px;height:18px;background:#d0d9fc"></div>
<div class="a" style="left:1204px;top:344px;width:18px;height:18px;background:#dee8fd"></div>
<div class="a" style="left:1222px;top:344px;width:18px;height:18px;background:#c0c8fa"></div>
<div class="a" style="left:1240px;top:344px;width:18px;height:18px;background:#c0c8fa"></div>
<div class="a" style="left:1258px;top:344px;width:18px;height:18px;background:#c0c8fa"></div>
<div class="a" style="left:1276px;top:344px;width:18px;height:18px;background:#c0c8fa"></div>
<div class="a" style="left:1294px;top:344px;width:18px;height:18px;background:#dee8fd"></div>
<div class="a" style="left:1168px;top:362px;width:18px;height:18px;background:#f4e4a4"></div>
<div class="a" style="left:1186px;top:362px;width:18px;height:18px;background:#e5d7ac"></div>
<div class="a" style="left:1204px;top:362px;width:18px;height:18px;background:#f4e4a4"></div>
<div class="a" style="left:1222px;top:362px;width:18px;height:18px;background:#d4c8b4"></div>
<div class="a" style="left:1240px;top:362px;width:18px;height:18px;background:#d4c8b4"></div>
<div class="a" style="left:1258px;top:362px;width:18px;height:18px;background:#d4c8b4"></div>
<div class="a" style="left:1276px;top:362px;width:18px;height:18px;background:#d4c8b4"></div>
<div class="a" style="left:1294px;top:362px;width:18px;height:18px;background:#f4e4a4"></div>
<div class="a" style="left:1168px;top:380px;width:18px;height:18px;background:#eedda5"></div>
<div class="a" style="left:1186px;top:380px;width:18px;height:18px;background:#d7c5ae"></div>
<div class="a" style="left:1204px;top:380px;width:18px;height:18px;background:#eedda5"></div>
<div class="a" style="left:1222px;top:380px;width:18px;height:18px;background:#bcaab8"></div>
<div class="a" style="left:1240px;top:380px;width:18px;height:18px;background:#bcaab8"></div>
<div class="a" style="left:1258px;top:380px;width:18px;height:18px;background:#bcaab8"></div>
<div class="a" style="left:1276px;top:380px;width:18px;height:18px;background:#bcaab8"></div>
<div class="a" style="left:1294px;top:380px;width:18px;height:18px;background:#eedda5"></div>
<div class="a" style="left:1168px;top:398px;width:18px;height:18px;background:#eaece6"></div>
<div class="a" style="left:1186px;top:398px;width:18px;height:18px;background:#e3e5e3"></div>
<div class="a" style="left:1204px;top:398px;width:18px;height:18px;background:#eaece6"></div>
<div class="a" style="left:1222px;top:398px;width:18px;height:18px;background:#dcdee0"></div>
<div class="a" style="left:1240px;top:398px;width:18px;height:18px;background:#dcdee0"></div>
<div class="a" style="left:1258px;top:398px;width:18px;height:18px;background:#dcdee0"></div>
<div class="a" style="left:1276px;top:398px;width:18px;height:18px;background:#dcdee0"></div>
<div class="a" style="left:1294px;top:398px;width:18px;height:18px;background:#eaece6"></div>
<div class="a" style="left:1168px;top:416px;width:18px;height:18px;background:#d4defe"></div>
<div class="a" style="left:1186px;top:416px;width:18px;height:18px;background:#b8c1fd"></div>
<div class="a" style="left:1204px;top:416px;width:18px;height:18px;background:#d4defe"></div>
<div class="a" style="left:1222px;top:416px;width:18px;height:18px;background:#98a0fc"></div>
<div class="a" style="left:1240px;top:416px;width:18px;height:18px;background:#98a0fc"></div>
<div class="a" style="left:1258px;top:416px;width:18px;height:18px;background:#98a0fc"></div>
<div class="a" style="left:1276px;top:416px;width:18px;height:18px;background:#98a0fc"></div>
<div class="a" style="left:1294px;top:416px;width:18px;height:18px;background:#d4defe"></div>
<div class="a" style="left:1168px;top:434px;width:18px;height:18px;background:#ecf1fe"></div>
<div class="a" style="left:1186px;top:434px;width:18px;height:18px;background:#e8edfd"></div>
<div class="a" style="left:1204px;top:434px;width:18px;height:18px;background:#ecf1fe"></div>
<div class="a" style="left:1222px;top:434px;width:18px;height:18px;background:#e4e8fc"></div>
<div class="a" style="left:1240px;top:434px;width:18px;height:18px;background:#e4e8fc"></div>
<div class="a" style="left:1258px;top:434px;width:18px;height:18px;background:#e4e8fc"></div>
<div class="a" style="left:1276px;top:434px;width:18px;height:18px;background:#e4e8fc"></div>
<div class="a" style="left:1294px;top:434px;width:18px;height:18px;background:#ecf1fe"></div>
<div class="a" style="left:1168px;top:452px;width:18px;height:18px;background:#e8e9fe"></div>
<div class="a" style="left:1186px;top:452px;width:18px;height:18px;background:#c8cbfd"></div>
<div class="a" style="left:1204px;top:452px;width:18px;height:18px;background:#e8e9fe"></div>
<div class="a" style="left:1222px;top:452px;width:18px;height:18px;background:#a4a8fc"></div>
<div class="a" style="left:1240px;top:452px;width:18px;height:18px;background:#a4a8fc"></div>
<div class="a" style="left:1258px;top:452px;width:18px;height:18px;background:#a4a8fc"></div>
<div class="a" style="left:1276px;top:452px;width:18px;height:18px;background:#a4a8fc"></div>
<div class="a" style="left:1294px;top:452px;width:18px;height:18px;background:#e8e9fe"></div>
<div class="a" style="left:1168px;top:470px;width:18px;height:18px;background:#f0f2fe"></div>
<div class="a" style="left:1186px;top:470px;width:18px;height:18px;background:#e9ebfd"></div>
<div class="a" style="left:1204px;top:470px;width:18px;height:18px;background:#f0f2fe"></div>
<div class="a" style="left:1222px;top:470px;width:18px;height:18px;background:#e2e4fc"></div>
<div class="a" style="left:1240px;top:470px;width:18px;height:18px;background:#e2e4fc"></div>
<div class="a" style="left:1258px;top:470px;width:18px;height:18px;background:#e2e4fc"></div>
<div class="a" style="left:1276px;top:470px;width:18px;height:18px;background:#e2e4fc"></div>
<div class="a" style="left:1294px;top:470px;width:18px;height:18px;background:#f0f2fe"></div>
<div class="a" style="left:1168px;top:488px;width:18px;height:18px;background:#d8e2fe"></div>
<div class="a" style="left:1186px;top:488px;width:18px;height:18px;background:#c2cafd"></div>
<div class="a" style="left:1204px;top:488px;width:18px;height:18px;background:#d8e2fe"></div>
<div class="a" style="left:1222px;top:488px;width:18px;height:18px;background:#a8b0fc"></div>
<div class="a" style="left:1240px;top:488px;width:18px;height:18px;background:#a8b0fc"></div>
<div class="a" style="left:1258px;top:488px;width:18px;height:18px;background:#a8b0fc"></div>
<div class="a" style="left:1276px;top:488px;width:18px;height:18px;background:#a8b0fc"></div>
<div class="a" style="left:1294px;top:488px;width:18px;height:18px;background:#d8e2fe"></div>
<div class="a" style="left:1168px;top:506px;width:18px;height:18px;background:#e0e8fe"></div>
<div class="a" style="left:1186px;top:506px;width:18px;height:18px;background:#d5dbfd"></div>
<div class="a" style="left:1204px;top:506px;width:18px;height:18px;background:#e0e8fe"></div>
<div class="a" style="left:1222px;top:506px;width:18px;height:18px;background:#c8ccfc"></div>
<div class="a" style="left:1240px;top:506px;width:18px;height:18px;background:#c8ccfc"></div>
<div class="a" style="left:1258px;top:506px;width:18px;height:18px;background:#c8ccfc"></div>
<div class="a" style="left:1276px;top:506px;width:18px;height:18px;background:#c8ccfc"></div>
<div class="a" style="left:1294px;top:506px;width:18px;height:18px;background:#e0e8fe"></div>
<div class="a" style="left:1168px;top:524px;width:18px;height:18px;background:#f3f3fe"></div>
<div class="a" style="left:1186px;top:524px;width:18px;height:18px;background:#e3e3fd"></div>
<div class="a" style="left:1204px;top:524px;width:18px;height:18px;background:#f3f3fe"></div>
<div class="a" style="left:1222px;top:524px;width:18px;height:18px;background:#d0d0fc"></div>
<div class="a" style="left:1240px;top:524px;width:18px;height:18px;background:#d0d0fc"></div>
<div class="a" style="left:1258px;top:524px;width:18px;height:18px;background:#d0d0fc"></div>
<div class="a" style="left:1276px;top:524px;width:18px;height:18px;background:#d0d0fc"></div>
<div class="a" style="left:1294px;top:524px;width:18px;height:18px;background:#f3f3fe"></div>
<div class="a" style="left:1402px;top:326px;width:18px;height:18px;background:#dae4fd"></div>
<div class="a" style="left:1420px;top:326px;width:18px;height:18px;background:#b0b8fa"></div>
<div class="a" style="left:1438px;top:326px;width:18px;height:18px;background:#c6cffc"></div>
<div class="a" style="left:1456px;top:326px;width:18px;height:18px;background:#c6cffc"></div>
<div class="a" style="left:1474px;top:326px;width:18px;height:18px;background:#b0b8fa"></div>
<div class="a" style="left:1492px;top:326px;width:18px;height:18px;background:#dae4fd"></div>
<div class="a" style="left:1402px;top:344px;width:18px;height:18px;background:#dee8fd"></div>
<div class="a" style="left:1420px;top:344px;width:18px;height:18px;background:#c0c8fa"></div>
<div class="a" style="left:1438px;top:344px;width:18px;height:18px;background:#d0d9fc"></div>
<div class="a" style="left:1456px;top:344px;width:18px;height:18px;background:#d0d9fc"></div>
<div class="a" style="left:1474px;top:344px;width:18px;height:18px;background:#c0c8fa"></div>
<div class="a" style="left:1492px;top:344px;width:18px;height:18px;background:#dee8fd"></div>
<div class="a" style="left:1402px;top:362px;width:18px;height:18px;background:#f4e4a4"></div>
<div class="a" style="left:1420px;top:362px;width:18px;height:18px;background:#d4c8b4"></div>
<div class="a" style="left:1438px;top:362px;width:18px;height:18px;background:#e5d7ac"></div>
<div class="a" style="left:1456px;top:362px;width:18px;height:18px;background:#e5d7ac"></div>
<div class="a" style="left:1474px;top:362px;width:18px;height:18px;background:#d4c8b4"></div>
<div class="a" style="left:1492px;top:362px;width:18px;height:18px;background:#f4e4a4"></div>
<div class="a" style="left:1402px;top:380px;width:18px;height:18px;background:#eedda5"></div>
<div class="a" style="left:1420px;top:380px;width:18px;height:18px;background:#bcaab8"></div>
<div class="a" style="left:1438px;top:380px;width:18px;height:18px;background:#d7c5ae"></div>
<div class="a" style="left:1456px;top:380px;width:18px;height:18px;background:#d7c5ae"></div>
<div class="a" style="left:1474px;top:380px;width:18px;height:18px;background:#bcaab8"></div>
<div class="a" style="left:1492px;top:380px;width:18px;height:18px;background:#eedda5"></div>
<div class="a" style="left:1402px;top:398px;width:18px;height:18px;background:#eaece6"></div>
<div class="a" style="left:1420px;top:398px;width:18px;height:18px;background:#dcdee0"></div>
<div class="a" style="left:1438px;top:398px;width:18px;height:18px;background:#e3e5e3"></div>
<div class="a" style="left:1456px;top:398px;width:18px;height:18px;background:#e3e5e3"></div>
<div class="a" style="left:1474px;top:398px;width:18px;height:18px;background:#dcdee0"></div>
<div class="a" style="left:1492px;top:398px;width:18px;height:18px;background:#eaece6"></div>
<div class="a" style="left:1402px;top:416px;width:18px;height:18px;background:#d4defe"></div>
<div class="a" style="left:1420px;top:416px;width:18px;height:18px;background:#98a0fc"></div>
<div class="a" style="left:1438px;top:416px;width:18px;height:18px;background:#b8c1fd"></div>
<div class="a" style="left:1456px;top:416px;width:18px;height:18px;background:#b8c1fd"></div>
<div class="a" style="left:1474px;top:416px;width:18px;height:18px;background:#98a0fc"></div>
<div class="a" style="left:1492px;top:416px;width:18px;height:18px;background:#d4defe"></div>
<div class="a" style="left:1402px;top:434px;width:18px;height:18px;background:#ecf1fe"></div>
<div class="a" style="left:1420px;top:434px;width:18px;height:18px;background:#e4e8fc"></div>
<div class="a" style="left:1438px;top:434px;width:18px;height:18px;background:#e8edfd"></div>
<div class="a" style="left:1456px;top:434px;width:18px;height:18px;background:#e8edfd"></div>
<div class="a" style="left:1474px;top:434px;width:18px;height:18px;background:#e4e8fc"></div>
<div class="a" style="left:1492px;top:434px;width:18px;height:18px;background:#ecf1fe"></div>
<div class="a" style="left:1402px;top:452px;width:18px;height:18px;background:#e8e9fe"></div>
<div class="a" style="left:1420px;top:452px;width:18px;height:18px;background:#a4a8fc"></div>
<div class="a" style="left:1438px;top:452px;width:18px;height:18px;background:#c8cbfd"></div>
<div class="a" style="left:1456px;top:452px;width:18px;height:18px;background:#c8cbfd"></div>
<div class="a" style="left:1474px;top:452px;width:18px;height:18px;background:#a4a8fc"></div>
<div class="a" style="left:1492px;top:452px;width:18px;height:18px;background:#e8e9fe"></div>
<div class="a" style="left:1402px;top:470px;width:18px;height:18px;background:#f0f2fe"></div>
<div class="a" style="left:1420px;top:470px;width:18px;height:18px;background:#e2e4fc"></div>
<div class="a" style="left:1438px;top:470px;width:18px;height:18px;background:#e9ebfd"></div>
<div class="a" style="left:1456px;top:470px;width:18px;height:18px;background:#e9ebfd"></div>
<div class="a" style="left:1474px;top:470px;width:18px;height:18px;background:#e2e4fc"></div>
<div class="a" style="left:1492px;top:470px;width:18px;height:18px;background:#f0f2fe"></div>
<div class="a" style="left:1402px;top:488px;width:18px;height:18px;background:#d8e2fe"></div>
<div class="a" style="left:1420px;top:488px;width:18px;height:18px;background:#a8b0fc"></div>
<div class="a" style="left:1438px;top:488px;width:18px;height:18px;background:#c2cafd"></div>
<div class="a" style="left:1456px;top:488px;width:18px;height:18px;background:#c2cafd"></div>
<div class="a" style="left:1474px;top:488px;width:18px;height:18px;background:#a8b0fc"></div>
<div class="a" style="left:1492px;top:488px;width:18px;height:18px;background:#d8e2fe"></div>
<div class="a" style="left:1402px;top:506px;width:18px;height:18px;background:#e0e8fe"></div>
<div class="a" style="left:1420px;top:506px;width:18px;height:18px;background:#c8ccfc"></div>
<div class="a" style="left:1438px;top:506px;width:18px;height:18px;background:#d5dbfd"></div>
<div class="a" style="left:1456px;top:506px;width:18px;height:18px;background:#d5dbfd"></div>
<div class="a" style="left:1474px;top:506px;width:18px;height:18px;background:#c8ccfc"></div>
<div class="a" style="left:1492px;top:506px;width:18px;height:18px;background:#e0e8fe"></div>
<div class="a" style="left:1402px;top:524px;width:18px;height:18px;background:#f3f3fe"></div>
<div class="a" style="left:1420px;top:524px;width:18px;height:18px;background:#d0d0fc"></div>
<div class="a" style="left:1438px;top:524px;width:18px;height:18px;background:#e3e3fd"></div>
<div class="a" style="left:1456px;top:524px;width:18px;height:18px;background:#e3e3fd"></div>
<div class="a" style="left:1474px;top:524px;width:18px;height:18px;background:#d0d0fc"></div>
<div class="a" style="left:1492px;top:524px;width:18px;height:18px;background:#f3f3fe"></div>
<div class="a" style="left:1636px;top:326px;width:18px;height:18px;background:#dae4fd"></div>
<div class="a" style="left:1654px;top:326px;width:18px;height:18px;background:#dae4fd"></div>
<div class="a" style="left:1672px;top:326px;width:18px;height:18px;background:#c6cffc"></div>
<div class="a" style="left:1690px;top:326px;width:18px;height:18px;background:#c6cffc"></div>
<div class="a" style="left:1708px;top:326px;width:18px;height:18px;background:#c6cffc"></div>
<div class="a" style="left:1726px;top:326px;width:18px;height:18px;background:#c6cffc"></div>
<div class="a" style="left:1744px;top:326px;width:18px;height:18px;background:#c6cffc"></div>
<div class="a" style="left:1762px;top:326px;width:18px;height:18px;background:#dae4fd"></div>
<div class="a" style="left:1636px;top:344px;width:18px;height:18px;background:#dee8fd"></div>
<div class="a" style="left:1654px;top:344px;width:18px;height:18px;background:#dee8fd"></div>
<div class="a" style="left:1672px;top:344px;width:18px;height:18px;background:#d0d9fc"></div>
<div class="a" style="left:1690px;top:344px;width:18px;height:18px;background:#d0d9fc"></div>
<div class="a" style="left:1708px;top:344px;width:18px;height:18px;background:#d0d9fc"></div>
<div class="a" style="left:1726px;top:344px;width:18px;height:18px;background:#d0d9fc"></div>
<div class="a" style="left:1744px;top:344px;width:18px;height:18px;background:#d0d9fc"></div>
<div class="a" style="left:1762px;top:344px;width:18px;height:18px;background:#dee8fd"></div>
<div class="a" style="left:1636px;top:362px;width:18px;height:18px;background:#f4e4a4"></div>
<div class="a" style="left:1654px;top:362px;width:18px;height:18px;background:#f4e4a4"></div>
<div class="a" style="left:1672px;top:362px;width:18px;height:18px;background:#e5d7ac"></div>
<div class="a" style="left:1690px;top:362px;width:18px;height:18px;background:#e5d7ac"></div>
<div class="a" style="left:1708px;top:362px;width:18px;height:18px;background:#e5d7ac"></div>
<div class="a" style="left:1726px;top:362px;width:18px;height:18px;background:#e5d7ac"></div>
<div class="a" style="left:1744px;top:362px;width:18px;height:18px;background:#e5d7ac"></div>
<div class="a" style="left:1762px;top:362px;width:18px;height:18px;background:#f4e4a4"></div>
<div class="a" style="left:1636px;top:380px;width:18px;height:18px;background:#eedda5"></div>
<div class="a" style="left:1654px;top:380px;width:18px;height:18px;background:#eedda5"></div>
<div class="a" style="left:1672px;top:380px;width:18px;height:18px;background:#d7c5ae"></div>
<div class="a" style="left:1690px;top:380px;width:18px;height:18px;background:#d7c5ae"></div>
<div class="a" style="left:1708px;top:380px;width:18px;height:18px;background:#d7c5ae"></div>
<div class="a" style="left:1726px;top:380px;width:18px;height:18px;background:#d7c5ae"></div>
<div class="a" style="left:1744px;top:380px;width:18px;height:18px;background:#d7c5ae"></div>
<div class="a" style="left:1762px;top:380px;width:18px;height:18px;background:#eedda5"></div>
<div class="a" style="left:1636px;top:398px;width:18px;height:18px;background:#eaece6"></div>
<div class="a" style="left:1654px;top:398px;width:18px;height:18px;background:#eaece6"></div>
<div class="a" style="left:1672px;top:398px;width:18px;height:18px;background:#e3e5e3"></div>
<div class="a" style="left:1690px;top:398px;width:18px;height:18px;background:#e3e5e3"></div>
<div class="a" style="left:1708px;top:398px;width:18px;height:18px;background:#e3e5e3"></div>
<div class="a" style="left:1726px;top:398px;width:18px;height:18px;background:#e3e5e3"></div>
<div class="a" style="left:1744px;top:398px;width:18px;height:18px;background:#e3e5e3"></div>
<div class="a" style="left:1762px;top:398px;width:18px;height:18px;background:#eaece6"></div>
<div class="a" style="left:1636px;top:416px;width:18px;height:18px;background:#d4defe"></div>
<div class="a" style="left:1654px;top:416px;width:18px;height:18px;background:#d4defe"></div>
<div class="a" style="left:1672px;top:416px;width:18px;height:18px;background:#b8c1fd"></div>
<div class="a" style="left:1690px;top:416px;width:18px;height:18px;background:#b8c1fd"></div>
<div class="a" style="left:1708px;top:416px;width:18px;height:18px;background:#b8c1fd"></div>
<div class="a" style="left:1726px;top:416px;width:18px;height:18px;background:#b8c1fd"></div>
<div class="a" style="left:1744px;top:416px;width:18px;height:18px;background:#b8c1fd"></div>
<div class="a" style="left:1762px;top:416px;width:18px;height:18px;background:#d4defe"></div>
<div class="a" style="left:1636px;top:434px;width:18px;height:18px;background:#ecf1fe"></div>
<div class="a" style="left:1654px;top:434px;width:18px;height:18px;background:#ecf1fe"></div>
<div class="a" style="left:1672px;top:434px;width:18px;height:18px;background:#e8edfd"></div>
<div class="a" style="left:1690px;top:434px;width:18px;height:18px;background:#e8edfd"></div>
<div class="a" style="left:1708px;top:434px;width:18px;height:18px;background:#e8edfd"></div>
<div class="a" style="left:1726px;top:434px;width:18px;height:18px;background:#e8edfd"></div>
<div class="a" style="left:1744px;top:434px;width:18px;height:18px;background:#e8edfd"></div>
<div class="a" style="left:1762px;top:434px;width:18px;height:18px;background:#ecf1fe"></div>
<div class="a" style="left:1636px;top:452px;width:18px;height:18px;background:#e8e9fe"></div>
<div class="a" style="left:1654px;top:452px;width:18px;height:18px;background:#e8e9fe"></div>
<div class="a" style="left:1672px;top:452px;width:18px;height:18px;background:#c8cbfd"></div>
<div class="a" style="left:1690px;top:452px;width:18px;height:18px;background:#c8cbfd"></div>
<div class="a" style="left:1708px;top:452px;width:18px;height:18px;background:#c8cbfd"></div>
<div class="a" style="left:1726px;top:452px;width:18px;height:18px;background:#c8cbfd"></div>
<div class="a" style="left:1744px;top:452px;width:18px;height:18px;background:#c8cbfd"></div>
<div class="a" style="left:1762px;top:452px;width:18px;height:18px;background:#e8e9fe"></div>
<div class="a" style="left:1636px;top:470px;width:18px;height:18px;background:#f0f2fe"></div>
<div class="a" style="left:1654px;top:470px;width:18px;height:18px;background:#f0f2fe"></div>
<div class="a" style="left:1672px;top:470px;width:18px;height:18px;background:#e9ebfd"></div>
<div class="a" style="left:1690px;top:470px;width:18px;height:18px;background:#e9ebfd"></div>
<div class="a" style="left:1708px;top:470px;width:18px;height:18px;background:#e9ebfd"></div>
<div class="a" style="left:1726px;top:470px;width:18px;height:18px;background:#e9ebfd"></div>
<div class="a" style="left:1744px;top:470px;width:18px;height:18px;background:#e9ebfd"></div>
<div class="a" style="left:1762px;top:470px;width:18px;height:18px;background:#f0f2fe"></div>
<div class="a" style="left:1636px;top:488px;width:18px;height:18px;background:#d8e2fe"></div>
<div class="a" style="left:1654px;top:488px;width:18px;height:18px;background:#d8e2fe"></div>
<div class="a" style="left:1672px;top:488px;width:18px;height:18px;background:#c2cafd"></div>
<div class="a" style="left:1690px;top:488px;width:18px;height:18px;background:#c2cafd"></div>
<div class="a" style="left:1708px;top:488px;width:18px;height:18px;background:#c2cafd"></div>
<div class="a" style="left:1726px;top:488px;width:18px;height:18px;background:#c2cafd"></div>
<div class="a" style="left:1744px;top:488px;width:18px;height:18px;background:#c2cafd"></div>
<div class="a" style="left:1762px;top:488px;width:18px;height:18px;background:#d8e2fe"></div>
<div class="a" style="left:1636px;top:506px;width:18px;height:18px;background:#e0e8fe"></div>
<div class="a" style="left:1654px;top:506px;width:18px;height:18px;background:#e0e8fe"></div>
<div class="a" style="left:1672px;top:506px;width:18px;height:18px;background:#d5dbfd"></div>
<div class="a" style="left:1690px;top:506px;width:18px;height:18px;background:#d5dbfd"></div>
<div class="a" style="left:1708px;top:506px;width:18px;height:18px;background:#d5dbfd"></div>
<div class="a" style="left:1726px;top:506px;width:18px;height:18px;background:#d5dbfd"></div>
<div class="a" style="left:1744px;top:506px;width:18px;height:18px;background:#d5dbfd"></div>
<div class="a" style="left:1762px;top:506px;width:18px;height:18px;background:#e0e8fe"></div>
<div class="a" style="left:1636px;top:524px;width:18px;height:18px;background:#f3f3fe"></div>
<div class="a" style="left:1654px;top:524px;width:18px;height:18px;background:#f3f3fe"></div>
<div class="a" style="left:1672px;top:524px;width:18px;height:18px;background:#e3e3fd"></div>
<div class="a" style="left:1690px;top:524px;width:18px;height:18px;background:#e3e3fd"></div>
<div class="a" style="left:1708px;top:524px;width:18px;height:18px;background:#e3e3fd"></div>
<div class="a" style="left:1726px;top:524px;width:18px;height:18px;background:#e3e3fd"></div>
<div class="a" style="left:1744px;top:524px;width:18px;height:18px;background:#e3e3fd"></div>
<div class="a" style="left:1762px;top:524px;width:18px;height:18px;background:#f3f3fe"></div>
<div class="a" style="left:1888px;top:326px;width:18px;height:18px;background:#dae4fd"></div>
<div class="a" style="left:1906px;top:326px;width:18px;height:18px;background:#b0b8fa"></div>
<div class="a" style="left:1924px;top:326px;width:18px;height:18px;background:#b0b8fa"></div>
<div class="a" style="left:1942px;top:326px;width:18px;height:18px;background:#b0b8fa"></div>
<div class="a" style="left:1960px;top:326px;width:18px;height:18px;background:#b0b8fa"></div>
<div class="a" style="left:1978px;top:326px;width:18px;height:18px;background:#b0b8fa"></div>
<div class="a" style="left:1996px;top:326px;width:18px;height:18px;background:#dae4fd"></div>
<div class="a" style="left:1888px;top:344px;width:18px;height:18px;background:#dee8fd"></div>
<div class="a" style="left:1906px;top:344px;width:18px;height:18px;background:#c0c8fa"></div>
<div class="a" style="left:1924px;top:344px;width:18px;height:18px;background:#c0c8fa"></div>
<div class="a" style="left:1942px;top:344px;width:18px;height:18px;background:#c0c8fa"></div>
<div class="a" style="left:1960px;top:344px;width:18px;height:18px;background:#c0c8fa"></div>
<div class="a" style="left:1978px;top:344px;width:18px;height:18px;background:#c0c8fa"></div>
<div class="a" style="left:1996px;top:344px;width:18px;height:18px;background:#dee8fd"></div>
<div class="a" style="left:1888px;top:362px;width:18px;height:18px;background:#f4e4a4"></div>
<div class="a" style="left:1906px;top:362px;width:18px;height:18px;background:#d4c8b4"></div>
<div class="a" style="left:1924px;top:362px;width:18px;height:18px;background:#d4c8b4"></div>
<div class="a" style="left:1942px;top:362px;width:18px;height:18px;background:#d4c8b4"></div>
<div class="a" style="left:1960px;top:362px;width:18px;height:18px;background:#d4c8b4"></div>
<div class="a" style="left:1978px;top:362px;width:18px;height:18px;background:#d4c8b4"></div>
<div class="a" style="left:1996px;top:362px;width:18px;height:18px;background:#f4e4a4"></div>
<div class="a" style="left:1888px;top:380px;width:18px;height:18px;background:#eedda5"></div>
<div class="a" style="left:1906px;top:380px;width:18px;height:18px;background:#bcaab8"></div>
<div class="a" style="left:1924px;top:380px;width:18px;height:18px;background:#bcaab8"></div>
<div class="a" style="left:1942px;top:380px;width:18px;height:18px;background:#bcaab8"></div>
<div class="a" style="left:1960px;top:380px;width:18px;height:18px;background:#bcaab8"></div>
<div class="a" style="left:1978px;top:380px;width:18px;height:18px;background:#bcaab8"></div>
<div class="a" style="left:1996px;top:380px;width:18px;height:18px;background:#eedda5"></div>
<div class="a" style="left:1888px;top:398px;width:18px;height:18px;background:#eaece6"></div>
<div class="a" style="left:1906px;top:398px;width:18px;height:18px;background:#dcdee0"></div>
<div class="a" style="left:1924px;top:398px;width:18px;height:18px;background:#dcdee0"></div>
<div class="a" style="left:1942px;top:398px;width:18px;height:18px;background:#dcdee0"></div>
<div class="a" style="left:1960px;top:398px;width:18px;height:18px;background:#dcdee0"></div>
<div class="a" style="left:1978px;top:398px;width:18px;height:18px;background:#dcdee0"></div>
<div class="a" style="left:1996px;top:398px;width:18px;height:18px;background:#eaece6"></div>
<div class="a" style="left:1888px;top:416px;width:18px;height:18px;background:#d4defe"></div>
<div class="a" style="left:1906px;top:416px;width:18px;height:18px;background:#98a0fc"></div>
<div class="a" style="left:1924px;top:416px;width:18px;height:18px;background:#98a0fc"></div>
<div class="a" style="left:1942px;top:416px;width:18px;height:18px;background:#98a0fc"></div>
<div class="a" style="left:1960px;top:416px;width:18px;height:18px;background:#98a0fc"></div>
<div class="a" style="left:1978px;top:416px;width:18px;height:18px;background:#98a0fc"></div>
<div class="a" style="left:1996px;top:416px;width:18px;height:18px;background:#d4defe"></div>
<div class="a" style="left:1888px;top:434px;width:18px;height:18px;background:#ecf1fe"></div>
<div class="a" style="left:1906px;top:434px;width:18px;height:18px;background:#e4e8fc"></div>
<div class="a" style="left:1924px;top:434px;width:18px;height:18px;background:#e4e8fc"></div>
<div class="a" style="left:1942px;top:434px;width:18px;height:18px;background:#e4e8fc"></div>
<div class="a" style="left:1960px;top:434px;width:18px;height:18px;background:#e4e8fc"></div>
<div class="a" style="left:1978px;top:434px;width:18px;height:18px;background:#e4e8fc"></div>
<div class="a" style="left:1996px;top:434px;width:18px;height:18px;background:#ecf1fe"></div>
<div class="a" style="left:1888px;top:452px;width:18px;height:18px;background:#e8e9fe"></div>
<div class="a" style="left:1906px;top:452px;width:18px;height:18px;background:#a4a8fc"></div>
<div class="a" style="left:1924px;top:452px;width:18px;height:18px;background:#a4a8fc"></div>
<div class="a" style="left:1942px;top:452px;width:18px;height:18px;background:#a4a8fc"></div>
<div class="a" style="left:1960px;top:452px;width:18px;height:18px;background:#a4a8fc"></div>
<div class="a" style="left:1978px;top:452px;width:18px;height:18px;background:#a4a8fc"></div>
<div class="a" style="left:1996px;top:452px;width:18px;height:18px;background:#e8e9fe"></div>
<div class="a" style="left:1888px;top:470px;width:18px;height:18px;background:#f0f2fe"></div>
<div class="a" style="left:1906px;top:470px;width:18px;height:18px;background:#e2e4fc"></div>
<div class="a" style="left:1924px;top:470px;width:18px;height:18px;background:#e2e4fc"></div>
<div class="a" style="left:1942px;top:470px;width:18px;height:18px;background:#e2e4fc"></div>
<div class="a" style="left:1960px;top:470px;width:18px;height:18px;background:#e2e4fc"></div>
<div class="a" style="left:1978px;top:470px;width:18px;height:18px;background:#e2e4fc"></div>
<div class="a" style="left:1996px;top:470px;width:18px;height:18px;background:#f0f2fe"></div>
<div class="a" style="left:1888px;top:488px;width:18px;height:18px;background:#d8e2fe"></div>
<div class="a" style="left:1906px;top:488px;width:18px;height:18px;background:#a8b0fc"></div>
<div class="a" style="left:1924px;top:488px;width:18px;height:18px;background:#a8b0fc"></div>
<div class="a" style="left:1942px;top:488px;width:18px;height:18px;background:#a8b0fc"></div>
<div class="a" style="left:1960px;top:488px;width:18px;height:18px;background:#a8b0fc"></div>
<div class="a" style="left:1978px;top:488px;width:18px;height:18px;background:#a8b0fc"></div>
<div class="a" style="left:1996px;top:488px;width:18px;height:18px;background:#d8e2fe"></div>
<div class="a" style="left:1888px;top:506px;width:18px;height:18px;background:#e0e8fe"></div>
<div class="a" style="left:1906px;top:506px;width:18px;height:18px;background:#c8ccfc"></div>
<div class="a" style="left:1924px;top:506px;width:18px;height:18px;background:#c8ccfc"></div>
<div class="a" style="left:1942px;top:506px;width:18px;height:18px;background:#c8ccfc"></div>
<div class="a" style="left:1960px;top:506px;width:18px;height:18px;background:#c8ccfc"></div>
<div class="a" style="left:1978px;top:506px;width:18px;height:18px;background:#c8ccfc"></div>
<div class="a" style="left:1996px;top:506px;width:18px;height:18px;background:#e0e8fe"></div>
<div class="a" style="left:1888px;top:524px;width:18px;height:18px;background:#f3f3fe"></div>
<div class="a" style="left:1906px;top:524px;width:18px;height:18px;background:#d0d0fc"></div>
<div class="a" style="left:1924px;top:524px;width:18px;height:18px;background:#d0d0fc"></div>
<div class="a" style="left:1942px;top:524px;width:18px;height:18px;background:#d0d0fc"></div>
<div class="a" style="left:1960px;top:524px;width:18px;height:18px;background:#d0d0fc"></div>
<div class="a" style="left:1978px;top:524px;width:18px;height:18px;background:#d0d0fc"></div>
<div class="a" style="left:1996px;top:524px;width:18px;height:18px;background:#f3f3fe"></div>
<div class="a" style="left:2212px;top:326px;width:18px;height:18px;background:#dae4fd"></div>
<div class="a" style="left:2230px;top:326px;width:18px;height:18px;background:#c6cffc"></div>
<div class="a" style="left:2248px;top:326px;width:18px;height:18px;background:#dae4fd"></div>
<div class="a" style="left:2212px;top:344px;width:18px;height:18px;background:#dee8fd"></div>
<div class="a" style="left:2230px;top:344px;width:18px;height:18px;background:#d0d9fc"></div>
<div class="a" style="left:2248px;top:344px;width:18px;height:18px;background:#dee8fd"></div>
<div class="a" style="left:2212px;top:362px;width:18px;height:18px;background:#f4e4a4"></div>
<div class="a" style="left:2230px;top:362px;width:18px;height:18px;background:#e5d7ac"></div>
<div class="a" style="left:2248px;top:362px;width:18px;height:18px;background:#f4e4a4"></div>
<div class="a" style="left:2212px;top:380px;width:18px;height:18px;background:#eedda5"></div>
<div class="a" style="left:2230px;top:380px;width:18px;height:18px;background:#d7c5ae"></div>
<div class="a" style="left:2248px;top:380px;width:18px;height:18px;background:#eedda5"></div>
<div class="a" style="left:2212px;top:398px;width:18px;height:18px;background:#eaece6"></div>
<div class="a" style="left:2230px;top:398px;width:18px;height:18px;background:#e3e5e3"></div>
<div class="a" style="left:2248px;top:398px;width:18px;height:18px;background:#eaece6"></div>
<div class="a" style="left:2212px;top:416px;width:18px;height:18px;background:#d4defe"></div>
<div class="a" style="left:2230px;top:416px;width:18px;height:18px;background:#b8c1fd"></div>
<div class="a" style="left:2248px;top:416px;width:18px;height:18px;background:#d4defe"></div>
<div class="a" style="left:2212px;top:434px;width:18px;height:18px;background:#ecf1fe"></div>
<div class="a" style="left:2230px;top:434px;width:18px;height:18px;background:#e8edfd"></div>
<div class="a" style="left:2248px;top:434px;width:18px;height:18px;background:#ecf1fe"></div>
<div class="a" style="left:2212px;top:452px;width:18px;height:18px;background:#e8e9fe"></div>
<div class="a" style="left:2230px;top:452px;width:18px;height:18px;background:#c8cbfd"></div>
<div class="a" style="left:2248px;top:452px;width:18px;height:18px;background:#e8e9fe"></div>
<div class="a" style="left:2212px;top:470px;width:18px;height:18px;background:#f0f2fe"></div>
<div class="a" style="left:2230px;top:470px;width:18px;height:18px;background:#e9ebfd"></div>
<div class="a" style="left:2248px;top:470px;width:18px;height:18px;background:#f0f2fe"></div>
<div class="a" style="left:2212px;top:488px;width:18px;height:18px;background:#d8e2fe"></div>
<div class="a" style="left:2230px;top:488px;width:18px;height:18px;background:#c2cafd"></div>
<div class="a" style="left:2248px;top:488px;width:18px;height:18px;background:#d8e2fe"></div>
<div class="a" style="left:2212px;top:506px;width:18px;height:18px;background:#e0e8fe"></div>
<div class="a" style="left:2230px;top:506px;width:18px;height:18px;background:#d5dbfd"></div>
<div class="a" style="left:2248px;top:506px;width:18px;height:18px;background:#e0e8fe"></div>
<div class="a" style="left:2212px;top:524px;width:18px;height:18px;background:#f3f3fe"></div>
<div class="a" style="left:2230px;top:524px;width:18px;height:18px;background:#e3e3fd"></div>
<div class="a" style="left:2248px;top:524px;width:18px;height:18px;background:#f3f3fe"></div>
<div class="a" style="left:2374px;top:326px;width:18px;height:18px;background:#dae4fd"></div>
<div class="a" style="left:2392px;top:326px;width:18px;height:18px;background:#c6cffc"></div>
<div class="a" style="left:2410px;top:326px;width:18px;height:18px;background:#c6cffc"></div>
<div class="a" style="left:2428px;top:326px;width:18px;height:18px;background:#b0b8fa"></div>
<div class="a" style="left:2446px;top:326px;width:18px;height:18px;background:#b0b8fa"></div>
<div class="a" style="left:2464px;top:326px;width:18px;height:18px;background:#c6cffc"></div>
<div class="a" style="left:2482px;top:326px;width:18px;height:18px;background:#b0b8fa"></div>
<div class="a" style="left:2500px;top:326px;width:18px;height:18px;background:#dae4fd"></div>
<div class="a" style="left:2374px;top:344px;width:18px;height:18px;background:#dee8fd"></div>
<div class="a" style="left:2392px;top:344px;width:18px;height:18px;background:#d0d9fc"></div>
<div class="a" style="left:2410px;top:344px;width:18px;height:18px;background:#d0d9fc"></div>
<div class="a" style="left:2428px;top:344px;width:18px;height:18px;background:#c0c8fa"></div>
<div class="a" style="left:2446px;top:344px;width:18px;height:18px;background:#c0c8fa"></div>
<div class="a" style="left:2464px;top:344px;width:18px;height:18px;background:#d0d9fc"></div>
<div class="a" style="left:2482px;top:344px;width:18px;height:18px;background:#c0c8fa"></div>
<div class="a" style="left:2500px;top:344px;width:18px;height:18px;background:#dee8fd"></div>
<div class="a" style="left:2374px;top:362px;width:18px;height:18px;background:#f4e4a4"></div>
<div class="a" style="left:2392px;top:362px;width:18px;height:18px;background:#e5d7ac"></div>
<div class="a" style="left:2410px;top:362px;width:18px;height:18px;background:#e5d7ac"></div>
<div class="a" style="left:2428px;top:362px;width:18px;height:18px;background:#d4c8b4"></div>
<div class="a" style="left:2446px;top:362px;width:18px;height:18px;background:#d4c8b4"></div>
<div class="a" style="left:2464px;top:362px;width:18px;height:18px;background:#e5d7ac"></div>
<div class="a" style="left:2482px;top:362px;width:18px;height:18px;background:#d4c8b4"></div>
<div class="a" style="left:2500px;top:362px;width:18px;height:18px;background:#f4e4a4"></div>
<div class="a" style="left:2374px;top:380px;width:18px;height:18px;background:#eedda5"></div>
<div class="a" style="left:2392px;top:380px;width:18px;height:18px;background:#d7c5ae"></div>
<div class="a" style="left:2410px;top:380px;width:18px;height:18px;background:#d7c5ae"></div>
<div class="a" style="left:2428px;top:380px;width:18px;height:18px;background:#bcaab8"></div>
<div class="a" style="left:2446px;top:380px;width:18px;height:18px;background:#bcaab8"></div>
<div class="a" style="left:2464px;top:380px;width:18px;height:18px;background:#d7c5ae"></div>
<div class="a" style="left:2482px;top:380px;width:18px;height:18px;background:#bcaab8"></div>
<div class="a" style="left:2500px;top:380px;width:18px;height:18px;background:#eedda5"></div>
<div class="a" style="left:2374px;top:398px;width:18px;height:18px;background:#eaece6"></div>
<div class="a" style="left:2392px;top:398px;width:18px;height:18px;background:#e3e5e3"></div>
<div class="a" style="left:2410px;top:398px;width:18px;height:18px;background:#e3e5e3"></div>
<div class="a" style="left:2428px;top:398px;width:18px;height:18px;background:#dcdee0"></div>
<div class="a" style="left:2446px;top:398px;width:18px;height:18px;background:#dcdee0"></div>
<div class="a" style="left:2464px;top:398px;width:18px;height:18px;background:#e3e5e3"></div>
<div class="a" style="left:2482px;top:398px;width:18px;height:18px;background:#dcdee0"></div>
<div class="a" style="left:2500px;top:398px;width:18px;height:18px;background:#eaece6"></div>
<div class="a" style="left:2374px;top:416px;width:18px;height:18px;background:#d4defe"></div>
<div class="a" style="left:2392px;top:416px;width:18px;height:18px;background:#b8c1fd"></div>
<div class="a" style="left:2410px;top:416px;width:18px;height:18px;background:#b8c1fd"></div>
<div class="a" style="left:2428px;top:416px;width:18px;height:18px;background:#98a0fc"></div>
<div class="a" style="left:2446px;top:416px;width:18px;height:18px;background:#98a0fc"></div>
<div class="a" style="left:2464px;top:416px;width:18px;height:18px;background:#b8c1fd"></div>
<div class="a" style="left:2482px;top:416px;width:18px;height:18px;background:#98a0fc"></div>
<div class="a" style="left:2500px;top:416px;width:18px;height:18px;background:#d4defe"></div>
<div class="a" style="left:2374px;top:434px;width:18px;height:18px;background:#ecf1fe"></div>
<div class="a" style="left:2392px;top:434px;width:18px;height:18px;background:#e8edfd"></div>
<div class="a" style="left:2410px;top:434px;width:18px;height:18px;background:#e8edfd"></div>
<div class="a" style="left:2428px;top:434px;width:18px;height:18px;background:#e4e8fc"></div>
<div class="a" style="left:2446px;top:434px;width:18px;height:18px;background:#e4e8fc"></div>
<div class="a" style="left:2464px;top:434px;width:18px;height:18px;background:#e8edfd"></div>
<div class="a" style="left:2482px;top:434px;width:18px;height:18px;background:#e4e8fc"></div>
<div class="a" style="left:2500px;top:434px;width:18px;height:18px;background:#ecf1fe"></div>
<div class="a" style="left:2374px;top:452px;width:18px;height:18px;background:#e8e9fe"></div>
<div class="a" style="left:2392px;top:452px;width:18px;height:18px;background:#c8cbfd"></div>
<div class="a" style="left:2410px;top:452px;width:18px;height:18px;background:#c8cbfd"></div>
<div class="a" style="left:2428px;top:452px;width:18px;height:18px;background:#a4a8fc"></div>
<div class="a" style="left:2446px;top:452px;width:18px;height:18px;background:#a4a8fc"></div>
<div class="a" style="left:2464px;top:452px;width:18px;height:18px;background:#c8cbfd"></div>
<div class="a" style="left:2482px;top:452px;width:18px;height:18px;background:#a4a8fc"></div>
<div class="a" style="left:2500px;top:452px;width:18px;height:18px;background:#e8e9fe"></div>
<div class="a" style="left:2374px;top:470px;width:18px;height:18px;background:#f0f2fe"></div>
<div class="a" style="left:2392px;top:470px;width:18px;height:18px;background:#e9ebfd"></div>
<div class="a" style="left:2410px;top:470px;width:18px;height:18px;background:#e9ebfd"></div>
<div class="a" style="left:2428px;top:470px;width:18px;height:18px;background:#e2e4fc"></div>
<div class="a" style="left:2446px;top:470px;width:18px;height:18px;background:#e2e4fc"></div>
<div class="a" style="left:2464px;top:470px;width:18px;height:18px;background:#e9ebfd"></div>
<div class="a" style="left:2482px;top:470px;width:18px;height:18px;background:#e2e4fc"></div>
<div class="a" style="left:2500px;top:470px;width:18px;height:18px;background:#f0f2fe"></div>
<div class="a" style="left:2374px;top:488px;width:18px;height:18px;background:#d8e2fe"></div>
<div class="a" style="left:2392px;top:488px;width:18px;height:18px;background:#c2cafd"></div>
<div class="a" style="left:2410px;top:488px;width:18px;height:18px;background:#c2cafd"></div>
<div class="a" style="left:2428px;top:488px;width:18px;height:18px;background:#a8b0fc"></div>
<div class="a" style="left:2446px;top:488px;width:18px;height:18px;background:#a8b0fc"></div>
<div class="a" style="left:2464px;top:488px;width:18px;height:18px;background:#c2cafd"></div>
<div class="a" style="left:2482px;top:488px;width:18px;height:18px;background:#a8b0fc"></div>
<div class="a" style="left:2500px;top:488px;width:18px;height:18px;background:#d8e2fe"></div>
<div class="a" style="left:2374px;top:506px;width:18px;height:18px;background:#e0e8fe"></div>
<div class="a" style="left:2392px;top:506px;width:18px;height:18px;background:#d5dbfd"></div>
<div class="a" style="left:2410px;top:506px;width:18px;height:18px;background:#d5dbfd"></div>
<div class="a" style="left:2428px;top:506px;width:18px;height:18px;background:#c8ccfc"></div>
<div class="a" style="left:2446px;top:506px;width:18px;height:18px;background:#c8ccfc"></div>
<div class="a" style="left:2464px;top:506px;width:18px;height:18px;background:#d5dbfd"></div>
<div class="a" style="left:2482px;top:506px;width:18px;height:18px;background:#c8ccfc"></div>
<div class="a" style="left:2500px;top:506px;width:18px;height:18px;background:#e0e8fe"></div>
<div class="a" style="left:2374px;top:524px;width:18px;height:18px;background:#f3f3fe"></div>
<div class="a" style="left:2392px;top:524px;width:18px;height:18px;background:#e3e3fd"></div>
<div class="a" style="left:2410px;top:524px;width:18px;height:18px;background:#e3e3fd"></div>
<div class="a" style="left:2428px;top:524px;width:18px;height:18px;background:#d0d0fc"></div>
<div class="a" style="left:2446px;top:524px;width:18px;height:18px;background:#d0d0fc"></div>
<div class="a" style="left:2464px;top:524px;width:18px;height:18px;background:#e3e3fd"></div>
<div class="a" style="left:2482px;top:524px;width:18px;height:18px;background:#d0d0fc"></div>
<div class="a" style="left:2500px;top:524px;width:18px;height:18px;background:#f3f3fe"></div>
<div class="a" style="left:898px;top:542px;width:18px;height:12px;background:#f8f8fd"></div>
<div class="a" style="left:916px;top:542px;width:18px;height:12px;background:#c4c4f0"></div>
<div class="a" style="left:934px;top:542px;width:18px;height:12px;background:#dcdcf6"></div>
<div class="a" style="left:952px;top:542px;width:18px;height:12px;background:#dcdcf6"></div>
<div class="a" style="left:970px;top:542px;width:18px;height:12px;background:#f8f8fd"></div>
<div class="a" style="left:1168px;top:542px;width:18px;height:12px;background:#f0f0fb"></div>
<div class="a" style="left:1186px;top:542px;width:18px;height:12px;background:#dcdcf6"></div>
<div class="a" style="left:1204px;top:542px;width:18px;height:12px;background:#f0f0fb"></div>
<div class="a" style="left:1222px;top:542px;width:18px;height:12px;background:#c4c4f0"></div>
<div class="a" style="left:1240px;top:542px;width:18px;height:12px;background:#c4c4f0"></div>
<div class="a" style="left:1258px;top:542px;width:18px;height:12px;background:#c4c4f0"></div>
<div class="a" style="left:1276px;top:542px;width:18px;height:12px;background:#c4c4f0"></div>
<div class="a" style="left:1294px;top:542px;width:18px;height:12px;background:#f0f0fb"></div>
<div class="a" style="left:1402px;top:542px;width:18px;height:12px;background:#f0f0fb"></div>
<div class="a" style="left:1420px;top:542px;width:18px;height:12px;background:#c4c4f0"></div>
<div class="a" style="left:1438px;top:542px;width:18px;height:12px;background:#dcdcf6"></div>
<div class="a" style="left:1456px;top:542px;width:18px;height:12px;background:#dcdcf6"></div>
<div class="a" style="left:1474px;top:542px;width:18px;height:12px;background:#c4c4f0"></div>
<div class="a" style="left:1492px;top:542px;width:18px;height:12px;background:#f0f0fb"></div>
<div class="a" style="left:1636px;top:542px;width:18px;height:12px;background:#f0f0fb"></div>
<div class="a" style="left:1654px;top:542px;width:18px;height:12px;background:#f0f0fb"></div>
<div class="a" style="left:1672px;top:542px;width:18px;height:12px;background:#dcdcf6"></div>
<div class="a" style="left:1690px;top:542px;width:18px;height:12px;background:#dcdcf6"></div>
<div class="a" style="left:1708px;top:542px;width:18px;height:12px;background:#dcdcf6"></div>
<div class="a" style="left:1726px;top:542px;width:18px;height:12px;background:#dcdcf6"></div>
<div class="a" style="left:1744px;top:542px;width:18px;height:12px;background:#dcdcf6"></div>
<div class="a" style="left:1762px;top:542px;width:18px;height:12px;background:#f0f0fb"></div>
<div class="a" style="left:1888px;top:542px;width:18px;height:12px;background:#f0f0fb"></div>
<div class="a" style="left:1906px;top:542px;width:18px;height:12px;background:#c4c4f0"></div>
<div class="a" style="left:1924px;top:542px;width:18px;height:12px;background:#c4c4f0"></div>
<div class="a" style="left:1942px;top:542px;width:18px;height:12px;background:#c4c4f0"></div>
<div class="a" style="left:1960px;top:542px;width:18px;height:12px;background:#c4c4f0"></div>
<div class="a" style="left:1978px;top:542px;width:18px;height:12px;background:#c4c4f0"></div>
<div class="a" style="left:1996px;top:542px;width:18px;height:12px;background:#f0f0fb"></div>
<div class="a" style="left:2212px;top:542px;width:18px;height:12px;background:#f0f0fb"></div>
<div class="a" style="left:2230px;top:542px;width:18px;height:12px;background:#dcdcf6"></div>
<div class="a" style="left:2248px;top:542px;width:18px;height:12px;background:#f0f0fb"></div>
<div class="a" style="left:2374px;top:542px;width:18px;height:12px;background:#f0f0fb"></div>
<div class="a" style="left:2392px;top:542px;width:18px;height:12px;background:#dcdcf6"></div>
<div class="a" style="left:2410px;top:542px;width:18px;height:12px;background:#dcdcf6"></div>
<div class="a" style="left:2428px;top:542px;width:18px;height:12px;background:#c4c4f0"></div>
<div class="a" style="left:2446px;top:542px;width:18px;height:12px;background:#c4c4f0"></div>
<div class="a" style="left:2464px;top:542px;width:18px;height:12px;background:#dcdcf6"></div>
<div class="a" style="left:2482px;top:542px;width:18px;height:12px;background:#c4c4f0"></div>
<div class="a" style="left:2500px;top:542px;width:18px;height:12px;background:#f0f0fb"></div>
<div class="a" style="left:898px;top:314px;width:18px;height:12px;background:#fafafd"></div>
<div class="a" style="left:916px;top:314px;width:18px;height:12px;background:#d8d8f0"></div>
<div class="a" style="left:934px;top:314px;width:18px;height:12px;background:#e8e8f6"></div>
<div class="a" style="left:952px;top:314px;width:18px;height:12px;background:#e8e8f6"></div>
<div class="a" style="left:970px;top:314px;width:18px;height:12px;background:#fafafd"></div>
<div class="a" style="left:1168px;top:314px;width:18px;height:12px;background:#f5f5fb"></div>
<div class="a" style="left:1186px;top:314px;width:18px;height:12px;background:#e8e8f6"></div>
<div class="a" style="left:1204px;top:314px;width:18px;height:12px;background:#f5f5fb"></div>
<div class="a" style="left:1222px;top:314px;width:18px;height:12px;background:#d8d8f0"></div>
<div class="a" style="left:1240px;top:314px;width:18px;height:12px;background:#d8d8f0"></div>
<div class="a" style="left:1258px;top:314px;width:18px;height:12px;background:#d8d8f0"></div>
<div class="a" style="left:1276px;top:314px;width:18px;height:12px;background:#d8d8f0"></div>
<div class="a" style="left:1294px;top:314px;width:18px;height:12px;background:#f5f5fb"></div>
<div class="a" style="left:1402px;top:314px;width:18px;height:12px;background:#f5f5fb"></div>
<div class="a" style="left:1420px;top:314px;width:18px;height:12px;background:#d8d8f0"></div>
<div class="a" style="left:1438px;top:314px;width:18px;height:12px;background:#e8e8f6"></div>
<div class="a" style="left:1456px;top:314px;width:18px;height:12px;background:#e8e8f6"></div>
<div class="a" style="left:1474px;top:314px;width:18px;height:12px;background:#d8d8f0"></div>
<div class="a" style="left:1492px;top:314px;width:18px;height:12px;background:#f5f5fb"></div>
<div class="a" style="left:1636px;top:314px;width:18px;height:12px;background:#f5f5fb"></div>
<div class="a" style="left:1654px;top:314px;width:18px;height:12px;background:#f5f5fb"></div>
<div class="a" style="left:1672px;top:314px;width:18px;height:12px;background:#e8e8f6"></div>
<div class="a" style="left:1690px;top:314px;width:18px;height:12px;background:#e8e8f6"></div>
<div class="a" style="left:1708px;top:314px;width:18px;height:12px;background:#e8e8f6"></div>
<div class="a" style="left:1726px;top:314px;width:18px;height:12px;background:#e8e8f6"></div>
<div class="a" style="left:1744px;top:314px;width:18px;height:12px;background:#e8e8f6"></div>
<div class="a" style="left:1762px;top:314px;width:18px;height:12px;background:#f5f5fb"></div>
<div class="a" style="left:1888px;top:314px;width:18px;height:12px;background:#f5f5fb"></div>
<div class="a" style="left:1906px;top:314px;width:18px;height:12px;background:#d8d8f0"></div>
<div class="a" style="left:1924px;top:314px;width:18px;height:12px;background:#d8d8f0"></div>
<div class="a" style="left:1942px;top:314px;width:18px;height:12px;background:#d8d8f0"></div>
<div class="a" style="left:1960px;top:314px;width:18px;height:12px;background:#d8d8f0"></div>
<div class="a" style="left:1978px;top:314px;width:18px;height:12px;background:#d8d8f0"></div>
<div class="a" style="left:1996px;top:314px;width:18px;height:12px;background:#f5f5fb"></div>
<div class="a" style="left:2212px;top:314px;width:18px;height:12px;background:#f5f5fb"></div>
<div class="a" style="left:2230px;top:314px;width:18px;height:12px;background:#e8e8f6"></div>
<div class="a" style="left:2248px;top:314px;width:18px;height:12px;background:#f5f5fb"></div>
<div class="a" style="left:2374px;top:314px;width:18px;height:12px;background:#f5f5fb"></div>
<div class="a" style="left:2392px;top:314px;width:18px;height:12px;background:#e8e8f6"></div>
<div class="a" style="left:2410px;top:314px;width:18px;height:12px;background:#e8e8f6"></div>
<div class="a" style="left:2428px;top:314px;width:18px;height:12px;background:#d8d8f0"></div>
<div class="a" style="left:2446px;top:314px;width:18px;height:12px;background:#d8d8f0"></div>
<div class="a" style="left:2464px;top:314px;width:18px;height:12px;background:#e8e8f6"></div>
<div class="a" style="left:2482px;top:314px;width:18px;height:12px;background:#d8d8f0"></div>
<div class="a" style="left:2500px;top:314px;width:18px;height:12px;background:#f5f5fb"></div>
<div class="a" style="left:1996px;top:452px;width:18px;height:18px;background:#7878fc"></div>
<div class="a" style="left:2014px;top:452px;width:18px;height:18px;background:#a4a8fc"></div>
<div class="a" style="left:2032px;top:452px;width:18px;height:18px;background:#d4d4fc"></div>
<div class="a" style="left:1996px;top:470px;width:54px;height:18px;background:#e4e4fc"></div>
<!--/GB-->
<div class="a" style="left:900px;top:554px;width:1624px;height:30px;background:#efefef"></div>
<div class="a" style="left:934px;top:554px;width:306px;height:30px;background:#dadada"></div>
<svg class="a" style="left:910px;top:563px" width="15" height="14"><path d="M15 0V14L0 7Z" fill="#000"/></svg>
<svg class="a" style="left:2500px;top:562px" width="14" height="15"><path d="M0 0V15L14 7.5Z" fill="#000"/></svg>
<div class="a" style="left:2524px;top:314px;width:30px;height:240px;background:#f0f0f0"></div>
<div class="a" style="left:2524px;top:554px;width:30px;height:30px;background:#f4f4f4"></div>
<div class="a" style="left:2536px;top:410px;width:18px;height:58px;background:#dcdcdc"></div>
<svg class="a" style="left:2532px;top:324px" width="15" height="14"><path d="M0 14H15L7.5 0Z" fill="#000"/></svg>
<!-- form -->
<div class="a" style="left:898px;top:596px;width:1658px;height:51px;background:#dedede"></div>
<div class="a" style="left:2526px;top:650px;width:30px;height:813px;background:#f0f0f0"></div>
<div class="a" style="left:2526px;top:686px;width:30px;height:532px;background:#dcdcdc"></div>
<svg class="a" style="left:2534px;top:662px" width="15" height="14"><path d="M0 14H15L7.5 0Z" fill="#000"/></svg>
<svg class="a" style="left:2534px;top:1439px" width="15" height="14"><path d="M0 0H15L7.5 14Z" fill="#000"/></svg>
<div class="a" style="left:1174px;top:662px;width:528px;height:48px;border:2px solid #c2c2c2"></div>
<div class="a" style="left:1979px;top:662px;width:527px;height:48px;border:2px solid #c2c2c2"></div>
<div class="t tg" style="left:917px;top:675px">一般类型</div>
<div class="t tg" style="left:1722px;top:675px">物料标识</div>
<div class="a" style="left:1174px;top:720px;width:528px;height:48px;border:2px solid #c2c2c2"></div>
<div class="a" style="left:1979px;top:720px;width:527px;height:48px;border:2px solid #c2c2c2"></div>
<div class="a" style="left:1174px;top:778px;width:528px;height:48px;border:2px solid #c2c2c2"></div>
<div class="a" style="left:1979px;top:778px;width:527px;height:48px;border:2px solid #c2c2c2"></div>
<div class="a" style="left:1174px;top:836px;width:528px;height:48px;border:2px solid #c2c2c2"></div>
<div class="a" style="left:1979px;top:836px;width:527px;height:48px;border:2px solid #c2c2c2"></div>
<div class="a" style="left:1174px;top:894px;width:528px;height:48px;border:2px solid #c2c2c2"></div>
<div class="a" style="left:1979px;top:894px;width:527px;height:48px;border:2px solid #c2c2c2"></div>
<div class="a" style="left:1174px;top:952px;width:528px;height:48px;border:2px solid #c2c2c2"></div>
<div class="a" style="left:1979px;top:952px;width:527px;height:48px;border:2px solid #c2c2c2"></div>
<div class="a" style="left:1174px;top:1010px;width:528px;height:48px;border:2px solid #c2c2c2"></div>
<div class="a" style="left:1979px;top:1010px;width:527px;height:48px;border:2px solid #c2c2c2"></div>
<div class="a" style="left:1174px;top:1068px;width:528px;height:48px;border:2px solid #c2c2c2"></div>
<div class="a" style="left:1979px;top:1068px;width:527px;height:48px;border:2px solid #c2c2c2"></div>
<div class="a" style="left:1174px;top:1126px;width:528px;height:48px;border:2px solid #c2c2c2"></div>
<div class="a" style="left:1979px;top:1126px;width:527px;height:48px;border:2px solid #c2c2c2"></div>
<div class="t tg" style="left:917px;top:1139px">物料类型</div>
<div class="t tg" style="left:1722px;top:1139px">物料标识</div>
<div class="a" style="left:1174px;top:1184px;width:528px;height:48px;border:2px solid #c2c2c2"></div>
<div class="a" style="left:1979px;top:1184px;width:527px;height:48px;border:2px solid #c2c2c2"></div>
<div class="t tg" style="left:917px;top:1197px">设计类型</div>
<div class="t tg" style="left:1722px;top:1197px"><span style="font-family:'Liberation Serif',serif">ABC</span>标识</div>
<div class="a" style="left:1174px;top:1242px;width:528px;height:48px;border:2px solid #c2c2c2"></div>
<div class="a" style="left:1979px;top:1242px;width:527px;height:48px;border:2px solid #c2c2c2"></div>
<div class="t tg" style="left:917px;top:1255px">原属产品号</div>
<div class="t tg" style="left:1722px;top:1255px">封装形式</div>
<div class="a" style="left:1174px;top:1300px;width:528px;height:48px;border:2px solid #c2c2c2"></div>
<div class="a" style="left:1979px;top:1300px;width:527px;height:48px;border:2px solid #c2c2c2"></div>
<div class="t tg" style="left:917px;top:1313px">设计参考件代号</div>
<div class="t tg" style="left:1722px;top:1313px">参照物料</div>
<div class="a" style="left:1174px;top:1358px;width:528px;height:48px;border:2px solid #c2c2c2"></div>
<div class="a" style="left:1979px;top:1358px;width:527px;height:48px;border:2px solid #c2c2c2"></div>
<div class="t tg" style="left:917px;top:1371px">电子设计图号</div>
<div class="t tg" style="left:1722px;top:1371px">设计重量</div>
<div class="a" style="left:1174px;top:1416px;width:528px;height:48px;border:2px solid #c2c2c2"></div>
<div class="a" style="left:1979px;top:1416px;width:527px;height:48px;border:2px solid #c2c2c2"></div>
<div class="t tg" style="left:917px;top:1429px">物料描述</div>
<div class="t tg" style="left:1722px;top:1429px">独立集中</div>
<div class="a" style="left:1168px;top:1174px;width:90px;height:18px;background:#ececec"></div>
<div class="a" style="left:1168px;top:1228px;width:64px;height:18px;background:#ebebeb"></div>
<div class="a" style="left:1222px;top:1192px;width:18px;height:36px;background:#ececec"></div>
<div class="a" style="left:1168px;top:1192px;width:18px;height:18px;background:#d0d0d0"></div>
<div class="a" style="left:1186px;top:1192px;width:18px;height:18px;background:#c8c8c8"></div>
<div class="a" style="left:1204px;top:1192px;width:18px;height:18px;background:#acacac"></div>
<div class="a" style="left:1168px;top:1210px;width:18px;height:18px;background:#dadada"></div>
<div class="a" style="left:1186px;top:1210px;width:18px;height:18px;background:#cecece"></div>
<div class="a" style="left:1204px;top:1210px;width:18px;height:18px;background:#b8b8b8"></div>
<div class="a" style="left:1168px;top:1246px;width:18px;height:216px;background:#efefef"></div>
<div class="a" style="left:1186px;top:1282px;width:42px;height:36px;background:#efefef"></div>
<div class="a" style="left:1186px;top:1336px;width:28px;height:36px;background:#efefef"></div>
<div class="a" style="left:1186px;top:1390px;width:18px;height:36px;background:#efefef"></div>
<div class="a" style="left:1186px;top:1406px;width:136px;height:20px;background:#efefef;border-radius:0 10px 0 0"></div>
<div class="a" style="left:1152px;top:1462px;width:160px;height:18px;background:#e2e2e2;border-radius:0 0 30px 30px"></div>
<div class="a" style="left:1168px;top:1426px;width:18px;height:18px;background:#e4e0dc"></div>
<div class="a" style="left:1168px;top:1444px;width:18px;height:19px;background:#ececec"></div>
<div class="a" style="left:1186px;top:1426px;width:18px;height:18px;background:#a8a8ac"></div>
<div class="a" style="left:1186px;top:1444px;width:18px;height:19px;background:#e4e4e4"></div>
<div class="a" style="left:1204px;top:1426px;width:18px;height:18px;background:#7c7c7c"></div>
<div class="a" style="left:1204px;top:1444px;width:18px;height:19px;background:#b8b8b8"></div>
<div class="a" style="left:1222px;top:1426px;width:18px;height:18px;background:#a0a0a0"></div>
<div class="a" style="left:1222px;top:1444px;width:18px;height:19px;background:#d0d0d0"></div>
<div class="a" style="left:1240px;top:1426px;width:18px;height:18px;background:#d8d4d0"></div>
<div class="a" style="left:1240px;top:1444px;width:18px;height:19px;background:#e4e4e4"></div>
<div class="a" style="left:1258px;top:1426px;width:18px;height:18px;background:#b4b4b8"></div>
<div class="a" style="left:1258px;top:1444px;width:18px;height:19px;background:#e8e8e8"></div>
<div class="a" style="left:1276px;top:1426px;width:18px;height:18px;background:#c4c4c4"></div>
<div class="a" style="left:1276px;top:1444px;width:18px;height:19px;background:#ececec"></div>
<div class="a" style="left:1294px;top:1426px;width:18px;height:18px;background:#c0bcc0"></div>
<div class="a" style="left:1294px;top:1444px;width:18px;height:19px;background:#e0e0e0"></div>
<div class="a" style="left:1312px;top:1426px;width:18px;height:18px;background:#c8c0bc"></div>
<div class="a" style="left:1312px;top:1444px;width:18px;height:19px;background:#e0e0e0"></div>
<div class="a" style="left:1330px;top:1426px;width:18px;height:18px;background:#d0d0d4"></div>
<div class="a" style="left:1330px;top:1444px;width:18px;height:19px;background:#e4e4e4"></div>
<div class="a" style="left:1348px;top:1426px;width:18px;height:18px;background:#c4c0c0"></div>
<div class="a" style="left:1348px;top:1444px;width:18px;height:19px;background:#f0f0f0"></div>
<div class="a" style="left:1366px;top:1426px;width:18px;height:18px;background:#b4b8b8"></div>
<div class="a" style="left:1366px;top:1444px;width:18px;height:19px;background:#e4e4e8"></div>
<div class="a" style="left:1384px;top:1426px;width:18px;height:18px;background:#c4bcbc"></div>
<div class="a" style="left:1384px;top:1444px;width:18px;height:19px;background:#e8e4e4"></div>
<div class="a" style="left:1402px;top:1426px;width:18px;height:18px;background:#d4d4d8"></div>
<div class="a" style="left:1402px;top:1444px;width:18px;height:19px;background:#e8e8e8"></div>
<div class="a" style="left:1420px;top:1426px;width:18px;height:18px;background:#b8b8b8"></div>
<div class="a" style="left:1420px;top:1444px;width:18px;height:19px;background:#e0e0e0"></div>
<div class="a" style="left:1438px;top:1426px;width:18px;height:18px;background:#d0d0d0"></div>
<div class="a" style="left:1438px;top:1444px;width:18px;height:19px;background:#eeeeee"></div>
<div class="a" style="left:1978px;top:1174px;width:50px;height:18px;background:#eeeeee"></div>
<div class="a" style="left:1978px;top:1192px;width:18px;height:18px;background:#d6d6d4"></div>
<div class="a" style="left:1978px;top:1210px;width:18px;height:18px;background:#dcdadb"></div>
<div class="a" style="left:1996px;top:1192px;width:18px;height:36px;background:#e8eaea"></div>
<div class="a" style="left:1978px;top:1228px;width:74px;height:18px;background:#ebebeb"></div>
<div class="a" style="left:1978px;top:1246px;width:18px;height:216px;background:#efefef"></div>
<div class="a" style="left:1996px;top:1282px;width:68px;height:36px;background:#efefef"></div>
<div class="a" style="left:1996px;top:1336px;width:68px;height:36px;background:#efefef"></div>
<div class="a" style="left:1996px;top:1390px;width:68px;height:36px;background:#efefef"></div>
<div class="a" style="left:1978px;top:1372px;width:18px;height:18px;background:#bcb6b6"></div>
<div class="a" style="left:1996px;top:1372px;width:18px;height:18px;background:#e8ecf0"></div>
<div class="a" style="left:1182px;top:1166px;width:76px;height:8px;border-radius:30px 30px 0 0;background:#c4d4e0"></div>
<div class="a" style="left:1972px;top:1164px;width:44px;height:10px;border-radius:22px 22px 0 0;background:#c4d4e0"></div>
<!-- tab bar -->
<div class="a" style="left:494px;top:1467px;width:180px;height:44px;background:#f4f4f4;border-radius:0 0 10px 10px"></div>
<svg class="a" style="left:509px;top:1473px" width="32" height="32" viewBox="0 0 32 32"><path d="M16 1 L31 16 L16 31 L1 16 Z" fill="#a8a8d8" stroke="#111" stroke-width="2"/></svg>
<div class="t tg" style="left:550px;top:1478px">定型区</div>
<svg class="a" style="left:631px;top:1483px" width="18" height="16" viewBox="0 0 18 16"><path d="M2 2 L16 14 M16 2 L2 14" stroke="#777" stroke-width="2"/><rect x="1" y="1" width="16" height="14" fill="none" stroke="#aaa" stroke-width="1" stroke-dasharray="2 2"/></svg>
<!-- dialog -->
<div class="a" style="left:818px;top:588px;width:1680px;height:574px;background:#f4f4f4"></div>
<div class="a" style="left:818px;top:588px;width:1680px;height:48px;background:linear-gradient(#2c7ab4 0px,#1f6ca8 14px,#12609e 30px,#11609d 48px)"></div>
<div class="a" style="left:822px;top:636px;width:1672px;height:412px;background:#fff"></div>
<div class="a" style="left:822px;top:636px;width:1672px;height:43px;background:#e6e6e6"></div>
<div class="a" style="left:822px;top:720px;width:1672px;height:40px;background:#e8f2fe"></div>
<div class="a" style="left:822px;top:800px;width:1672px;height:40px;background:#e8f2fe"></div>
<div class="a" style="left:822px;top:880px;width:1672px;height:40px;background:#e8f2fe"></div>
<div class="a" style="left:892px;top:636px;width:2px;height:43px;background:#fafafa"></div>
<div class="a" style="left:892px;top:720px;width:2px;height:40px;background:#fff"></div>
<div class="a" style="left:892px;top:800px;width:2px;height:40px;background:#fff"></div>
<div class="a" style="left:892px;top:880px;width:2px;height:40px;background:#fff"></div>
<div class="a" style="left:1092px;top:636px;width:2px;height:43px;background:#fafafa"></div>
<div class="a" style="left:1092px;top:720px;width:2px;height:40px;background:#fff"></div>
<div class="a" style="left:1092px;top:800px;width:2px;height:40px;background:#fff"></div>
<div class="a" style="left:1092px;top:880px;width:2px;height:40px;background:#fff"></div>
<div class="a" style="left:1292px;top:636px;width:2px;height:43px;background:#fafafa"></div>
<div class="a" style="left:1292px;top:720px;width:2px;height:40px;background:#fff"></div>
<div class="a" style="left:1292px;top:800px;width:2px;height:40px;background:#fff"></div>
<div class="a" style="left:1292px;top:880px;width:2px;height:40px;background:#fff"></div>
<div class="a" style="left:1492px;top:636px;width:2px;height:43px;background:#fafafa"></div>
<div class="a" style="left:1492px;top:720px;width:2px;height:40px;background:#fff"></div>
<div class="a" style="left:1492px;top:800px;width:2px;height:40px;background:#fff"></div>
<div class="a" style="left:1492px;top:880px;width:2px;height:40px;background:#fff"></div>
<div class="a" style="left:1692px;top:636px;width:2px;height:43px;background:#fafafa"></div>
<div class="a" style="left:1692px;top:720px;width:2px;height:40px;background:#fff"></div>
<div class="a" style="left:1692px;top:800px;width:2px;height:40px;background:#fff"></div>
<div class="a" style="left:1692px;top:880px;width:2px;height:40px;background:#fff"></div>
<div class="a" style="left:1892px;top:636px;width:2px;height:43px;background:#fafafa"></div>
<div class="a" style="left:1892px;top:720px;width:2px;height:40px;background:#fff"></div>
<div class="a" style="left:1892px;top:800px;width:2px;height:40px;background:#fff"></div>
<div class="a" style="left:1892px;top:880px;width:2px;height:40px;background:#fff"></div>
<div class="a" style="left:2092px;top:636px;width:2px;height:43px;background:#fafafa"></div>
<div class="a" style="left:2092px;top:720px;width:2px;height:40px;background:#fff"></div>
<div class="a" style="left:2092px;top:800px;width:2px;height:40px;background:#fff"></div>
<div class="a" style="left:2092px;top:880px;width:2px;height:40px;background:#fff"></div>
<div class="a" style="left:2292px;top:636px;width:2px;height:43px;background:#fafafa"></div>
<div class="a" style="left:2292px;top:720px;width:2px;height:40px;background:#fff"></div>
<div class="a" style="left:2292px;top:800px;width:2px;height:40px;background:#fff"></div>
<div class="a" style="left:2292px;top:880px;width:2px;height:40px;background:#fff"></div>
<!--DB-->
<div class="a" style="left:952px;top:684px;width:18px;height:18px;background:#f8f8f8"></div>
<div class="a" style="left:970px;top:684px;width:18px;height:18px;background:#c8c8c8"></div>
<div class="a" style="left:988px;top:684px;width:18px;height:18px;background:#c8c8c8"></div>
<div class="a" style="left:1006px;top:684px;width:18px;height:18px;background:#dedede"></div>
<div class="a" style="left:1024px;top:684px;width:18px;height:18px;background:#f8f8f8"></div>
<div class="a" style="left:952px;top:702px;width:18px;height:18px;background:#fcfcfc"></div>
<div class="a" style="left:970px;top:702px;width:18px;height:18px;background:#e4e4e4"></div>
<div class="a" style="left:988px;top:702px;width:18px;height:18px;background:#e4e4e4"></div>
<div class="a" style="left:1006px;top:702px;width:18px;height:18px;background:#efefef"></div>
<div class="a" style="left:1024px;top:702px;width:18px;height:18px;background:#fcfcfc"></div>
<div class="a" style="left:952px;top:720px;width:18px;height:18px;background:#e3ecf8"></div>
<div class="a" style="left:970px;top:720px;width:18px;height:18px;background:#bcc2d0"></div>
<div class="a" style="left:988px;top:720px;width:18px;height:18px;background:#bcc2d0"></div>
<div class="a" style="left:1006px;top:720px;width:18px;height:18px;background:#ced5e2"></div>
<div class="a" style="left:1024px;top:720px;width:18px;height:18px;background:#e3ecf8"></div>
<div class="a" style="left:952px;top:738px;width:18px;height:18px;background:#e4edf9"></div>
<div class="a" style="left:970px;top:738px;width:18px;height:18px;background:#c8ccd8"></div>
<div class="a" style="left:988px;top:738px;width:18px;height:18px;background:#c8ccd8"></div>
<div class="a" style="left:1006px;top:738px;width:18px;height:18px;background:#d5dbe7"></div>
<div class="a" style="left:1024px;top:738px;width:18px;height:18px;background:#e4edf9"></div>
<div class="a" style="left:952px;top:756px;width:18px;height:18px;background:#fcfcfc"></div>
<div class="a" style="left:970px;top:756px;width:18px;height:18px;background:#e2e2e2"></div>
<div class="a" style="left:988px;top:756px;width:18px;height:18px;background:#e2e2e2"></div>
<div class="a" style="left:1006px;top:756px;width:18px;height:18px;background:#eeeeee"></div>
<div class="a" style="left:1024px;top:756px;width:18px;height:18px;background:#fcfcfc"></div>
<div class="a" style="left:952px;top:774px;width:18px;height:18px;background:#f9f9f9"></div>
<div class="a" style="left:970px;top:774px;width:18px;height:18px;background:#cccccc"></div>
<div class="a" style="left:988px;top:774px;width:18px;height:18px;background:#cccccc"></div>
<div class="a" style="left:1006px;top:774px;width:18px;height:18px;background:#e0e0e0"></div>
<div class="a" style="left:1024px;top:774px;width:18px;height:18px;background:#f9f9f9"></div>
<div class="a" style="left:952px;top:792px;width:18px;height:18px;background:#e7f0fc"></div>
<div class="a" style="left:970px;top:792px;width:18px;height:18px;background:#dde2ee"></div>
<div class="a" style="left:988px;top:792px;width:18px;height:18px;background:#dde2ee"></div>
<div class="a" style="left:1006px;top:792px;width:18px;height:18px;background:#e1e8f4"></div>
<div class="a" style="left:1024px;top:792px;width:18px;height:18px;background:#e7f0fc"></div>
<div class="a" style="left:952px;top:810px;width:18px;height:18px;background:#e1ebf7"></div>
<div class="a" style="left:970px;top:810px;width:18px;height:18px;background:#aeb4c2"></div>
<div class="a" style="left:988px;top:810px;width:18px;height:18px;background:#aeb4c2"></div>
<div class="a" style="left:1006px;top:810px;width:18px;height:18px;background:#c5cdda"></div>
<div class="a" style="left:1024px;top:810px;width:18px;height:18px;background:#e1ebf7"></div>
<div class="a" style="left:952px;top:828px;width:18px;height:18px;background:#fcfdfe"></div>
<div class="a" style="left:970px;top:828px;width:18px;height:18px;background:#e8ecf4"></div>
<div class="a" style="left:988px;top:828px;width:18px;height:18px;background:#e8ecf4"></div>
<div class="a" style="left:1006px;top:828px;width:18px;height:18px;background:#f1f4f8"></div>
<div class="a" style="left:1024px;top:828px;width:18px;height:18px;background:#fcfdfe"></div>
<div class="a" style="left:952px;top:846px;width:18px;height:18px;background:#f7f7f7"></div>
<div class="a" style="left:970px;top:846px;width:18px;height:18px;background:#c0c0c0"></div>
<div class="a" style="left:988px;top:846px;width:18px;height:18px;background:#c0c0c0"></div>
<div class="a" style="left:1006px;top:846px;width:18px;height:18px;background:#d9d9d9"></div>
<div class="a" style="left:1024px;top:846px;width:18px;height:18px;background:#f7f7f7"></div>
<div class="a" style="left:952px;top:864px;width:18px;height:18px;background:#fdfdfe"></div>
<div class="a" style="left:970px;top:864px;width:18px;height:18px;background:#eceef4"></div>
<div class="a" style="left:988px;top:864px;width:18px;height:18px;background:#eceef4"></div>
<div class="a" style="left:1006px;top:864px;width:18px;height:18px;background:#f4f5f8"></div>
<div class="a" style="left:1024px;top:864px;width:18px;height:18px;background:#fdfdfe"></div>
<div class="a" style="left:952px;top:882px;width:18px;height:18px;background:#e2ebf8"></div>
<div class="a" style="left:970px;top:882px;width:18px;height:18px;background:#b4bac8"></div>
<div class="a" style="left:988px;top:882px;width:18px;height:18px;background:#b4bac8"></div>
<div class="a" style="left:1006px;top:882px;width:18px;height:18px;background:#c9d0de"></div>
<div class="a" style="left:1024px;top:882px;width:18px;height:18px;background:#e2ebf8"></div>
<div class="a" style="left:952px;top:900px;width:18px;height:18px;background:#e5eefa"></div>
<div class="a" style="left:970px;top:900px;width:18px;height:18px;background:#ccd0dc"></div>
<div class="a" style="left:988px;top:900px;width:18px;height:18px;background:#ccd0dc"></div>
<div class="a" style="left:1006px;top:900px;width:18px;height:18px;background:#d7deea"></div>
<div class="a" style="left:1024px;top:900px;width:18px;height:18px;background:#e5eefa"></div>
<div class="a" style="left:1150px;top:684px;width:18px;height:18px;background:#f8f8f8"></div>
<div class="a" style="left:1168px;top:684px;width:18px;height:18px;background:#dedede"></div>
<div class="a" style="left:1186px;top:684px;width:18px;height:18px;background:#c8c8c8"></div>
<div class="a" style="left:1204px;top:684px;width:18px;height:18px;background:#f1f1f1"></div>
<div class="a" style="left:1222px;top:684px;width:18px;height:18px;background:#f8f8f8"></div>
<div class="a" style="left:1150px;top:702px;width:18px;height:18px;background:#fcfcfc"></div>
<div class="a" style="left:1168px;top:702px;width:18px;height:18px;background:#efefef"></div>
<div class="a" style="left:1186px;top:702px;width:18px;height:18px;background:#e4e4e4"></div>
<div class="a" style="left:1204px;top:702px;width:18px;height:18px;background:#f8f8f8"></div>
<div class="a" style="left:1222px;top:702px;width:18px;height:18px;background:#fcfcfc"></div>
<div class="a" style="left:1150px;top:720px;width:18px;height:18px;background:#e3ecf8"></div>
<div class="a" style="left:1168px;top:720px;width:18px;height:18px;background:#ced5e2"></div>
<div class="a" style="left:1186px;top:720px;width:18px;height:18px;background:#bcc2d0"></div>
<div class="a" style="left:1204px;top:720px;width:18px;height:18px;background:#dde6f2"></div>
<div class="a" style="left:1222px;top:720px;width:18px;height:18px;background:#e3ecf8"></div>
<div class="a" style="left:1150px;top:738px;width:18px;height:18px;background:#e4edf9"></div>
<div class="a" style="left:1168px;top:738px;width:18px;height:18px;background:#d5dbe7"></div>
<div class="a" style="left:1186px;top:738px;width:18px;height:18px;background:#c8ccd8"></div>
<div class="a" style="left:1204px;top:738px;width:18px;height:18px;background:#e0e8f4"></div>
<div class="a" style="left:1222px;top:738px;width:18px;height:18px;background:#e4edf9"></div>
<div class="a" style="left:1150px;top:756px;width:18px;height:18px;background:#fcfcfc"></div>
<div class="a" style="left:1168px;top:756px;width:18px;height:18px;background:#eeeeee"></div>
<div class="a" style="left:1186px;top:756px;width:18px;height:18px;background:#e2e2e2"></div>
<div class="a" style="left:1204px;top:756px;width:18px;height:18px;background:#f8f8f8"></div>
<div class="a" style="left:1222px;top:756px;width:18px;height:18px;background:#fcfcfc"></div>
<div class="a" style="left:1150px;top:774px;width:18px;height:18px;background:#f9f9f9"></div>
<div class="a" style="left:1168px;top:774px;width:18px;height:18px;background:#e0e0e0"></div>
<div class="a" style="left:1186px;top:774px;width:18px;height:18px;background:#cccccc"></div>
<div class="a" style="left:1204px;top:774px;width:18px;height:18px;background:#f2f2f2"></div>
<div class="a" style="left:1222px;top:774px;width:18px;height:18px;background:#f9f9f9"></div>
<div class="a" style="left:1150px;top:792px;width:18px;height:18px;background:#e7f0fc"></div>
<div class="a" style="left:1168px;top:792px;width:18px;height:18px;background:#e1e8f4"></div>
<div class="a" style="left:1186px;top:792px;width:18px;height:18px;background:#dde2ee"></div>
<div class="a" style="left:1204px;top:792px;width:18px;height:18px;background:#e5eefa"></div>
<div class="a" style="left:1222px;top:792px;width:18px;height:18px;background:#e7f0fc"></div>
<div class="a" style="left:1150px;top:810px;width:18px;height:18px;background:#e1ebf7"></div>
<div class="a" style="left:1168px;top:810px;width:18px;height:18px;background:#c5cdda"></div>
<div class="a" style="left:1186px;top:810px;width:18px;height:18px;background:#aeb4c2"></div>
<div class="a" style="left:1204px;top:810px;width:18px;height:18px;background:#dae2ef"></div>
<div class="a" style="left:1222px;top:810px;width:18px;height:18px;background:#e1ebf7"></div>
<div class="a" style="left:1150px;top:828px;width:18px;height:18px;background:#fcfdfe"></div>
<div class="a" style="left:1168px;top:828px;width:18px;height:18px;background:#f1f4f8"></div>
<div class="a" style="left:1186px;top:828px;width:18px;height:18px;background:#e8ecf4"></div>
<div class="a" style="left:1204px;top:828px;width:18px;height:18px;background:#f9fafc"></div>
<div class="a" style="left:1222px;top:828px;width:18px;height:18px;background:#fcfdfe"></div>
<div class="a" style="left:1150px;top:846px;width:18px;height:18px;background:#f7f7f7"></div>
<div class="a" style="left:1168px;top:846px;width:18px;height:18px;background:#d9d9d9"></div>
<div class="a" style="left:1186px;top:846px;width:18px;height:18px;background:#c0c0c0"></div>
<div class="a" style="left:1204px;top:846px;width:18px;height:18px;background:#efefef"></div>
<div class="a" style="left:1222px;top:846px;width:18px;height:18px;background:#f7f7f7"></div>
<div class="a" style="left:1150px;top:864px;width:18px;height:18px;background:#fdfdfe"></div>
<div class="a" style="left:1168px;top:864px;width:18px;height:18px;background:#f4f5f8"></div>
<div class="a" style="left:1186px;top:864px;width:18px;height:18px;background:#eceef4"></div>
<div class="a" style="left:1204px;top:864px;width:18px;height:18px;background:#fafbfc"></div>
<div class="a" style="left:1222px;top:864px;width:18px;height:18px;background:#fdfdfe"></div>
<div class="a" style="left:1150px;top:882px;width:18px;height:18px;background:#e2ebf8"></div>
<div class="a" style="left:1168px;top:882px;width:18px;height:18px;background:#c9d0de"></div>
<div class="a" style="left:1186px;top:882px;width:18px;height:18px;background:#b4bac8"></div>
<div class="a" style="left:1204px;top:882px;width:18px;height:18px;background:#dbe4f0"></div>
<div class="a" style="left:1222px;top:882px;width:18px;height:18px;background:#e2ebf8"></div>
<div class="a" style="left:1150px;top:900px;width:18px;height:18px;background:#e5eefa"></div>
<div class="a" style="left:1168px;top:900px;width:18px;height:18px;background:#d7deea"></div>
<div class="a" style="left:1186px;top:900px;width:18px;height:18px;background:#ccd0dc"></div>
<div class="a" style="left:1204px;top:900px;width:18px;height:18px;background:#e1eaf6"></div>
<div class="a" style="left:1222px;top:900px;width:18px;height:18px;background:#e5eefa"></div>
<div class="a" style="left:1348px;top:684px;width:18px;height:18px;background:#f8f8f8"></div>
<div class="a" style="left:1366px;top:684px;width:18px;height:18px;background:#dedede"></div>
<div class="a" style="left:1384px;top:684px;width:18px;height:18px;background:#c8c8c8"></div>
<div class="a" style="left:1402px;top:684px;width:18px;height:18px;background:#f1f1f1"></div>
<div class="a" style="left:1420px;top:684px;width:18px;height:18px;background:#f8f8f8"></div>
<div class="a" style="left:1348px;top:702px;width:18px;height:18px;background:#fcfcfc"></div>
<div class="a" style="left:1366px;top:702px;width:18px;height:18px;background:#efefef"></div>
<div class="a" style="left:1384px;top:702px;width:18px;height:18px;background:#e4e4e4"></div>
<div class="a" style="left:1402px;top:702px;width:18px;height:18px;background:#f8f8f8"></div>
<div class="a" style="left:1420px;top:702px;width:18px;height:18px;background:#fcfcfc"></div>
<div class="a" style="left:1348px;top:720px;width:18px;height:18px;background:#e3ecf8"></div>
<div class="a" style="left:1366px;top:720px;width:18px;height:18px;background:#ced5e2"></div>
<div class="a" style="left:1384px;top:720px;width:18px;height:18px;background:#bcc2d0"></div>
<div class="a" style="left:1402px;top:720px;width:18px;height:18px;background:#dde6f2"></div>
<div class="a" style="left:1420px;top:720px;width:18px;height:18px;background:#e3ecf8"></div>
<div class="a" style="left:1348px;top:738px;width:18px;height:18px;background:#e4edf9"></div>
<div class="a" style="left:1366px;top:738px;width:18px;height:18px;background:#d5dbe7"></div>
<div class="a" style="left:1384px;top:738px;width:18px;height:18px;background:#c8ccd8"></div>
<div class="a" style="left:1402px;top:738px;width:18px;height:18px;background:#e0e8f4"></div>
<div class="a" style="left:1420px;top:738px;width:18px;height:18px;background:#e4edf9"></div>
<div class="a" style="left:1348px;top:756px;width:18px;height:18px;background:#fcfcfc"></div>
<div class="a" style="left:1366px;top:756px;width:18px;height:18px;background:#eeeeee"></div>
<div class="a" style="left:1384px;top:756px;width:18px;height:18px;background:#e2e2e2"></div>
<div class="a" style="left:1402px;top:756px;width:18px;height:18px;background:#f8f8f8"></div>
<div class="a" style="left:1420px;top:756px;width:18px;height:18px;background:#fcfcfc"></div>
<div class="a" style="left:1348px;top:774px;width:18px;height:18px;background:#f9f9f9"></div>
<div class="a" style="left:1366px;top:774px;width:18px;height:18px;background:#e0e0e0"></div>
<div class="a" style="left:1384px;top:774px;width:18px;height:18px;background:#cccccc"></div>
<div class="a" style="left:1402px;top:774px;width:18px;height:18px;background:#f2f2f2"></div>
<div class="a" style="left:1420px;top:774px;width:18px;height:18px;background:#f9f9f9"></div>
<div class="a" style="left:1348px;top:792px;width:18px;height:18px;background:#e7f0fc"></div>
<div class="a" style="left:1366px;top:792px;width:18px;height:18px;background:#e1e8f4"></div>
<div class="a" style="left:1384px;top:792px;width:18px;height:18px;background:#dde2ee"></div>
<div class="a" style="left:1402px;top:792px;width:18px;height:18px;background:#e5eefa"></div>
<div class="a" style="left:1420px;top:792px;width:18px;height:18px;background:#e7f0fc"></div>
<div class="a" style="left:1348px;top:810px;width:18px;height:18px;background:#e1ebf7"></div>
<div class="a" style="left:1366px;top:810px;width:18px;height:18px;background:#c5cdda"></div>
<div class="a" style="left:1384px;top:810px;width:18px;height:18px;background:#aeb4c2"></div>
<div class="a" style="left:1402px;top:810px;width:18px;height:18px;background:#dae2ef"></div>
<div class="a" style="left:1420px;top:810px;width:18px;height:18px;background:#e1ebf7"></div>
<div class="a" style="left:1348px;top:828px;width:18px;height:18px;background:#fcfdfe"></div>
<div class="a" style="left:1366px;top:828px;width:18px;height:18px;background:#f1f4f8"></div>
<div class="a" style="left:1384px;top:828px;width:18px;height:18px;background:#e8ecf4"></div>
<div class="a" style="left:1402px;top:828px;width:18px;height:18px;background:#f9fafc"></div>
<div class="a" style="left:1420px;top:828px;width:18px;height:18px;background:#fcfdfe"></div>
<div class="a" style="left:1348px;top:846px;width:18px;height:18px;background:#f7f7f7"></div>
<div class="a" style="left:1366px;top:846px;width:18px;height:18px;background:#d9d9d9"></div>
<div class="a" style="left:1384px;top:846px;width:18px;height:18px;background:#c0c0c0"></div>
<div class="a" style="left:1402px;top:846px;width:18px;height:18px;background:#efefef"></div>
<div class="a" style="left:1420px;top:846px;width:18px;height:18px;background:#f7f7f7"></div>
<div class="a" style="left:1348px;top:864px;width:18px;height:18px;background:#fdfdfe"></div>
<div class="a" style="left:1366px;top:864px;width:18px;height:18px;background:#f4f5f8"></div>
<div class="a" style="left:1384px;top:864px;width:18px;height:18px;background:#eceef4"></div>
<div class="a" style="left:1402px;top:864px;width:18px;height:18px;background:#fafbfc"></div>
<div class="a" style="left:1420px;top:864px;width:18px;height:18px;background:#fdfdfe"></div>
<div class="a" style="left:1348px;top:882px;width:18px;height:18px;background:#e2ebf8"></div>
<div class="a" style="left:1366px;top:882px;width:18px;height:18px;background:#c9d0de"></div>
<div class="a" style="left:1384px;top:882px;width:18px;height:18px;background:#b4bac8"></div>
<div class="a" style="left:1402px;top:882px;width:18px;height:18px;background:#dbe4f0"></div>
<div class="a" style="left:1420px;top:882px;width:18px;height:18px;background:#e2ebf8"></div>
<div class="a" style="left:1348px;top:900px;width:18px;height:18px;background:#e5eefa"></div>
<div class="a" style="left:1366px;top:900px;width:18px;height:18px;background:#d7deea"></div>
<div class="a" style="left:1384px;top:900px;width:18px;height:18px;background:#ccd0dc"></div>
<div class="a" style="left:1402px;top:900px;width:18px;height:18px;background:#e1eaf6"></div>
<div class="a" style="left:1420px;top:900px;width:18px;height:18px;background:#e5eefa"></div>
<div class="a" style="left:1546px;top:684px;width:18px;height:18px;background:#f8f8f8"></div>
<div class="a" style="left:1564px;top:684px;width:18px;height:18px;background:#f1f1f1"></div>
<div class="a" style="left:1582px;top:684px;width:18px;height:18px;background:#c8c8c8"></div>
<div class="a" style="left:1600px;top:684px;width:18px;height:18px;background:#dedede"></div>
<div class="a" style="left:1618px;top:684px;width:18px;height:18px;background:#f8f8f8"></div>
<div class="a" style="left:1546px;top:702px;width:18px;height:18px;background:#fcfcfc"></div>
<div class="a" style="left:1564px;top:702px;width:18px;height:18px;background:#f8f8f8"></div>
<div class="a" style="left:1582px;top:702px;width:18px;height:18px;background:#e4e4e4"></div>
<div class="a" style="left:1600px;top:702px;width:18px;height:18px;background:#efefef"></div>
<div class="a" style="left:1618px;top:702px;width:18px;height:18px;background:#fcfcfc"></div>
<div class="a" style="left:1546px;top:720px;width:18px;height:18px;background:#e3ecf8"></div>
<div class="a" style="left:1564px;top:720px;width:18px;height:18px;background:#dde6f2"></div>
<div class="a" style="left:1582px;top:720px;width:18px;height:18px;background:#bcc2d0"></div>
<div class="a" style="left:1600px;top:720px;width:18px;height:18px;background:#ced5e2"></div>
<div class="a" style="left:1618px;top:720px;width:18px;height:18px;background:#e3ecf8"></div>
<div class="a" style="left:1546px;top:738px;width:18px;height:18px;background:#e4edf9"></div>
<div class="a" style="left:1564px;top:738px;width:18px;height:18px;background:#e0e8f4"></div>
<div class="a" style="left:1582px;top:738px;width:18px;height:18px;background:#c8ccd8"></div>
<div class="a" style="left:1600px;top:738px;width:18px;height:18px;background:#d5dbe7"></div>
<div class="a" style="left:1618px;top:738px;width:18px;height:18px;background:#e4edf9"></div>
<div class="a" style="left:1546px;top:756px;width:18px;height:18px;background:#fcfcfc"></div>
<div class="a" style="left:1564px;top:756px;width:18px;height:18px;background:#f8f8f8"></div>
<div class="a" style="left:1582px;top:756px;width:18px;height:18px;background:#e2e2e2"></div>
<div class="a" style="left:1600px;top:756px;width:18px;height:18px;background:#eeeeee"></div>
<div class="a" style="left:1618px;top:756px;width:18px;height:18px;background:#fcfcfc"></div>
<div class="a" style="left:1546px;top:774px;width:18px;height:18px;background:#f9f9f9"></div>
<div class="a" style="left:1564px;top:774px;width:18px;height:18px;background:#f2f2f2"></div>
<div class="a" style="left:1582px;top:774px;width:18px;height:18px;background:#cccccc"></div>
<div class="a" style="left:1600px;top:774px;width:18px;height:18px;background:#e0e0e0"></div>
<div class="a" style="left:1618px;top:774px;width:18px;height:18px;background:#f9f9f9"></div>
<div class="a" style="left:1546px;top:792px;width:18px;height:18px;background:#e7f0fc"></div>
<div class="a" style="left:1564px;top:792px;width:18px;height:18px;background:#e5eefa"></div>
<div class="a" style="left:1582px;top:792px;width:18px;height:18px;background:#dde2ee"></div>
<div class="a" style="left:1600px;top:792px;width:18px;height:18px;background:#e1e8f4"></div>
<div class="a" style="left:1618px;top:792px;width:18px;height:18px;background:#e7f0fc"></div>
<div class="a" style="left:1546px;top:810px;width:18px;height:18px;background:#e1ebf7"></div>
<div class="a" style="left:1564px;top:810px;width:18px;height:18px;background:#dae2ef"></div>
<div class="a" style="left:1582px;top:810px;width:18px;height:18px;background:#aeb4c2"></div>
<div class="a" style="left:1600px;top:810px;width:18px;height:18px;background:#c5cdda"></div>
<div class="a" style="left:1618px;top:810px;width:18px;height:18px;background:#e1ebf7"></div>
<div class="a" style="left:1546px;top:828px;width:18px;height:18px;background:#fcfdfe"></div>
<div class="a" style="left:1564px;top:828px;width:18px;height:18px;background:#f9fafc"></div>
<div class="a" style="left:1582px;top:828px;width:18px;height:18px;background:#e8ecf4"></div>
<div class="a" style="left:1600px;top:828px;width:18px;height:18px;background:#f1f4f8"></div>
<div class="a" style="left:1618px;top:828px;width:18px;height:18px;background:#fcfdfe"></div>
<div class="a" style="left:1546px;top:846px;width:18px;height:18px;background:#f7f7f7"></div>
<div class="a" style="left:1564px;top:846px;width:18px;height:18px;background:#efefef"></div>
<div class="a" style="left:1582px;top:846px;width:18px;height:18px;background:#c0c0c0"></div>
<div class="a" style="left:1600px;top:846px;width:18px;height:18px;background:#d9d9d9"></div>
<div class="a" style="left:1618px;top:846px;width:18px;height:18px;background:#f7f7f7"></div>
<div class="a" style="left:1546px;top:864px;width:18px;height:18px;background:#fdfdfe"></div>
<div class="a" style="left:1564px;top:864px;width:18px;height:18px;background:#fafbfc"></div>
<div class="a" style="left:1582px;top:864px;width:18px;height:18px;background:#eceef4"></div>
<div class="a" style="left:1600px;top:864px;width:18px;height:18px;background:#f4f5f8"></div>
<div class="a" style="left:1618px;top:864px;width:18px;height:18px;background:#fdfdfe"></div>
<div class="a" style="left:1546px;top:882px;width:18px;height:18px;background:#e2ebf8"></div>
<div class="a" style="left:1564px;top:882px;width:18px;height:18px;background:#dbe4f0"></div>
<div class="a" style="left:1582px;top:882px;width:18px;height:18px;background:#b4bac8"></div>
<div class="a" style="left:1600px;top:882px;width:18px;height:18px;background:#c9d0de"></div>
<div class="a" style="left:1618px;top:882px;width:18px;height:18px;background:#e2ebf8"></div>
<div class="a" style="left:1546px;top:900px;width:18px;height:18px;background:#e5eefa"></div>
<div class="a" style="left:1564px;top:900px;width:18px;height:18px;background:#e1eaf6"></div>
<div class="a" style="left:1582px;top:900px;width:18px;height:18px;background:#ccd0dc"></div>
<div class="a" style="left:1600px;top:900px;width:18px;height:18px;background:#d7deea"></div>
<div class="a" style="left:1618px;top:900px;width:18px;height:18px;background:#e5eefa"></div>
<div class="a" style="left:1762px;top:684px;width:18px;height:18px;background:#f8f8f8"></div>
<div class="a" style="left:1780px;top:684px;width:18px;height:18px;background:#c8c8c8"></div>
<div class="a" style="left:1798px;top:684px;width:18px;height:18px;background:#dedede"></div>
<div class="a" style="left:1816px;top:684px;width:18px;height:18px;background:#f8f8f8"></div>
<div class="a" style="left:1762px;top:702px;width:18px;height:18px;background:#fcfcfc"></div>
<div class="a" style="left:1780px;top:702px;width:18px;height:18px;background:#e4e4e4"></div>
<div class="a" style="left:1798px;top:702px;width:18px;height:18px;background:#efefef"></div>
<div class="a" style="left:1816px;top:702px;width:18px;height:18px;background:#fcfcfc"></div>
<div class="a" style="left:1762px;top:720px;width:18px;height:18px;background:#e3ecf8"></div>
<div class="a" style="left:1780px;top:720px;width:18px;height:18px;background:#bcc2d0"></div>
<div class="a" style="left:1798px;top:720px;width:18px;height:18px;background:#ced5e2"></div>
<div class="a" style="left:1816px;top:720px;width:18px;height:18px;background:#e3ecf8"></div>
<div class="a" style="left:1762px;top:738px;width:18px;height:18px;background:#e4edf9"></div>
<div class="a" style="left:1780px;top:738px;width:18px;height:18px;background:#c8ccd8"></div>
<div class="a" style="left:1798px;top:738px;width:18px;height:18px;background:#d5dbe7"></div>
<div class="a" style="left:1816px;top:738px;width:18px;height:18px;background:#e4edf9"></div>
<div class="a" style="left:1762px;top:756px;width:18px;height:18px;background:#fcfcfc"></div>
<div class="a" style="left:1780px;top:756px;width:18px;height:18px;background:#e2e2e2"></div>
<div class="a" style="left:1798px;top:756px;width:18px;height:18px;background:#eeeeee"></div>
<div class="a" style="left:1816px;top:756px;width:18px;height:18px;background:#fcfcfc"></div>
<div class="a" style="left:1762px;top:774px;width:18px;height:18px;background:#f9f9f9"></div>
<div class="a" style="left:1780px;top:774px;width:18px;height:18px;background:#cccccc"></div>
<div class="a" style="left:1798px;top:774px;width:18px;height:18px;background:#e0e0e0"></div>
<div class="a" style="left:1816px;top:774px;width:18px;height:18px;background:#f9f9f9"></div>
<div class="a" style="left:1762px;top:792px;width:18px;height:18px;background:#e7f0fc"></div>
<div class="a" style="left:1780px;top:792px;width:18px;height:18px;background:#dde2ee"></div>
<div class="a" style="left:1798px;top:792px;width:18px;height:18px;background:#e1e8f4"></div>
<div class="a" style="left:1816px;top:792px;width:18px;height:18px;background:#e7f0fc"></div>
<div class="a" style="left:1762px;top:810px;width:18px;height:18px;background:#e1ebf7"></div>
<div class="a" style="left:1780px;top:810px;width:18px;height:18px;background:#aeb4c2"></div>
<div class="a" style="left:1798px;top:810px;width:18px;height:18px;background:#c5cdda"></div>
<div class="a" style="left:1816px;top:810px;width:18px;height:18px;background:#e1ebf7"></div>
<div class="a" style="left:1762px;top:828px;width:18px;height:18px;background:#fcfdfe"></div>
<div class="a" style="left:1780px;top:828px;width:18px;height:18px;background:#e8ecf4"></div>
<div class="a" style="left:1798px;top:828px;width:18px;height:18px;background:#f1f4f8"></div>
<div class="a" style="left:1816px;top:828px;width:18px;height:18px;background:#fcfdfe"></div>
<div class="a" style="left:1762px;top:846px;width:18px;height:18px;background:#f7f7f7"></div>
<div class="a" style="left:1780px;top:846px;width:18px;height:18px;background:#c0c0c0"></div>
<div class="a" style="left:1798px;top:846px;width:18px;height:18px;background:#d9d9d9"></div>
<div class="a" style="left:1816px;top:846px;width:18px;height:18px;background:#f7f7f7"></div>
<div class="a" style="left:1762px;top:864px;width:18px;height:18px;background:#fdfdfe"></div>
<div class="a" style="left:1780px;top:864px;width:18px;height:18px;background:#eceef4"></div>
<div class="a" style="left:1798px;top:864px;width:18px;height:18px;background:#f4f5f8"></div>
<div class="a" style="left:1816px;top:864px;width:18px;height:18px;background:#fdfdfe"></div>
<div class="a" style="left:1762px;top:882px;width:18px;height:18px;background:#e2ebf8"></div>
<div class="a" style="left:1780px;top:882px;width:18px;height:18px;background:#b4bac8"></div>
<div class="a" style="left:1798px;top:882px;width:18px;height:18px;background:#c9d0de"></div>
<div class="a" style="left:1816px;top:882px;width:18px;height:18px;background:#e2ebf8"></div>
<div class="a" style="left:1762px;top:900px;width:18px;height:18px;background:#e5eefa"></div>
<div class="a" style="left:1780px;top:900px;width:18px;height:18px;background:#ccd0dc"></div>
<div class="a" style="left:1798px;top:900px;width:18px;height:18px;background:#d7deea"></div>
<div class="a" style="left:1816px;top:900px;width:18px;height:18px;background:#e5eefa"></div>
<div class="a" style="left:1960px;top:684px;width:18px;height:18px;background:#f8f8f8"></div>
<div class="a" style="left:1978px;top:684px;width:18px;height:18px;background:#c8c8c8"></div>
<div class="a" style="left:1996px;top:684px;width:18px;height:18px;background:#c8c8c8"></div>
<div class="a" style="left:2014px;top:684px;width:18px;height:18px;background:#f8f8f8"></div>
<div class="a" style="left:1960px;top:702px;width:18px;height:18px;background:#fcfcfc"></div>
<div class="a" style="left:1978px;top:702px;width:18px;height:18px;background:#e4e4e4"></div>
<div class="a" style="left:1996px;top:702px;width:18px;height:18px;background:#e4e4e4"></div>
<div class="a" style="left:2014px;top:702px;width:18px;height:18px;background:#fcfcfc"></div>
<div class="a" style="left:1960px;top:720px;width:18px;height:18px;background:#e3ecf8"></div>
<div class="a" style="left:1978px;top:720px;width:18px;height:18px;background:#bcc2d0"></div>
<div class="a" style="left:1996px;top:720px;width:18px;height:18px;background:#bcc2d0"></div>
<div class="a" style="left:2014px;top:720px;width:18px;height:18px;background:#e3ecf8"></div>
<div class="a" style="left:1960px;top:738px;width:18px;height:18px;background:#e4edf9"></div>
<div class="a" style="left:1978px;top:738px;width:18px;height:18px;background:#c8ccd8"></div>
<div class="a" style="left:1996px;top:738px;width:18px;height:18px;background:#c8ccd8"></div>
<div class="a" style="left:2014px;top:738px;width:18px;height:18px;background:#e4edf9"></div>
<div class="a" style="left:1960px;top:756px;width:18px;height:18px;background:#fcfcfc"></div>
<div class="a" style="left:1978px;top:756px;width:18px;height:18px;background:#e2e2e2"></div>
<div class="a" style="left:1996px;top:756px;width:18px;height:18px;background:#e2e2e2"></div>
<div class="a" style="left:2014px;top:756px;width:18px;height:18px;background:#fcfcfc"></div>
<div class="a" style="left:1960px;top:774px;width:18px;height:18px;background:#f9f9f9"></div>
<div class="a" style="left:1978px;top:774px;width:18px;height:18px;background:#cccccc"></div>
<div class="a" style="left:1996px;top:774px;width:18px;height:18px;background:#cccccc"></div>
<div class="a" style="left:2014px;top:774px;width:18px;height:18px;background:#f9f9f9"></div>
<div class="a" style="left:1960px;top:792px;width:18px;height:18px;background:#e7f0fc"></div>
<div class="a" style="left:1978px;top:792px;width:18px;height:18px;background:#dde2ee"></div>
<div class="a" style="left:1996px;top:792px;width:18px;height:18px;background:#dde2ee"></div>
<div class="a" style="left:2014px;top:792px;width:18px;height:18px;background:#e7f0fc"></div>
<div class="a" style="left:1960px;top:810px;width:18px;height:18px;background:#e1ebf7"></div>
<div class="a" style="left:1978px;top:810px;width:18px;height:18px;background:#aeb4c2"></div>
<div class="a" style="left:1996px;top:810px;width:18px;height:18px;background:#aeb4c2"></div>
<div class="a" style="left:2014px;top:810px;width:18px;height:18px;background:#e1ebf7"></div>
<div class="a" style="left:1960px;top:828px;width:18px;height:18px;background:#fcfdfe"></div>
<div class="a" style="left:1978px;top:828px;width:18px;height:18px;background:#e8ecf4"></div>
<div class="a" style="left:1996px;top:828px;width:18px;height:18px;background:#e8ecf4"></div>
<div class="a" style="left:2014px;top:828px;width:18px;height:18px;background:#fcfdfe"></div>
<div class="a" style="left:1960px;top:846px;width:18px;height:18px;background:#f7f7f7"></div>
<div class="a" style="left:1978px;top:846px;width:18px;height:18px;background:#c0c0c0"></div>
<div class="a" style="left:1996px;top:846px;width:18px;height:18px;background:#c0c0c0"></div>
<div class="a" style="left:2014px;top:846px;width:18px;height:18px;background:#f7f7f7"></div>
<div class="a" style="left:1960px;top:864px;width:18px;height:18px;background:#fdfdfe"></div>
<div class="a" style="left:1978px;top:864px;width:18px;height:18px;background:#eceef4"></div>
<div class="a" style="left:1996px;top:864px;width:18px;height:18px;background:#eceef4"></div>
<div class="a" style="left:2014px;top:864px;width:18px;height:18px;background:#fdfdfe"></div>
<div class="a" style="left:1960px;top:882px;width:18px;height:18px;background:#e2ebf8"></div>
<div class="a" style="left:1978px;top:882px;width:18px;height:18px;background:#b4bac8"></div>
<div class="a" style="left:1996px;top:882px;width:18px;height:18px;background:#b4bac8"></div>
<div class="a" style="left:2014px;top:882px;width:18px;height:18px;background:#e2ebf8"></div>
<div class="a" style="left:1960px;top:900px;width:18px;height:18px;background:#e5eefa"></div>
<div class="a" style="left:1978px;top:900px;width:18px;height:18px;background:#ccd0dc"></div>
<div class="a" style="left:1996px;top:900px;width:18px;height:18px;background:#ccd0dc"></div>
<div class="a" style="left:2014px;top:900px;width:18px;height:18px;background:#e5eefa"></div>
<div class="a" style="left:2158px;top:684px;width:18px;height:18px;background:#f8f8f8"></div>
<div class="a" style="left:2176px;top:684px;width:18px;height:18px;background:#c8c8c8"></div>
<div class="a" style="left:2194px;top:684px;width:18px;height:18px;background:#c8c8c8"></div>
<div class="a" style="left:2212px;top:684px;width:18px;height:18px;background:#f8f8f8"></div>
<div class="a" style="left:2158px;top:702px;width:18px;height:18px;background:#fcfcfc"></div>
<div class="a" style="left:2176px;top:702px;width:18px;height:18px;background:#e4e4e4"></div>
<div class="a" style="left:2194px;top:702px;width:18px;height:18px;background:#e4e4e4"></div>
<div class="a" style="left:2212px;top:702px;width:18px;height:18px;background:#fcfcfc"></div>
<div class="a" style="left:2158px;top:720px;width:18px;height:18px;background:#e3ecf8"></div>
<div class="a" style="left:2176px;top:720px;width:18px;height:18px;background:#bcc2d0"></div>
<div class="a" style="left:2194px;top:720px;width:18px;height:18px;background:#bcc2d0"></div>
<div class="a" style="left:2212px;top:720px;width:18px;height:18px;background:#e3ecf8"></div>
<div class="a" style="left:2158px;top:738px;width:18px;height:18px;background:#e4edf9"></div>
<div class="a" style="left:2176px;top:738px;width:18px;height:18px;background:#c8ccd8"></div>
<div class="a" style="left:2194px;top:738px;width:18px;height:18px;background:#c8ccd8"></div>
<div class="a" style="left:2212px;top:738px;width:18px;height:18px;background:#e4edf9"></div>
<div class="a" style="left:2158px;top:756px;width:18px;height:18px;background:#fcfcfc"></div>
<div class="a" style="left:2176px;top:756px;width:18px;height:18px;background:#e2e2e2"></div>
<div class="a" style="left:2194px;top:756px;width:18px;height:18px;background:#e2e2e2"></div>
<div class="a" style="left:2212px;top:756px;width:18px;height:18px;background:#fcfcfc"></div>
<div class="a" style="left:2158px;top:774px;width:18px;height:18px;background:#f9f9f9"></div>
<div class="a" style="left:2176px;top:774px;width:18px;height:18px;background:#cccccc"></div>
<div class="a" style="left:2194px;top:774px;width:18px;height:18px;background:#cccccc"></div>
<div class="a" style="left:2212px;top:774px;width:18px;height:18px;background:#f9f9f9"></div>
<div class="a" style="left:2158px;top:792px;width:18px;height:18px;background:#e7f0fc"></div>
<div class="a" style="left:2176px;top:792px;width:18px;height:18px;background:#dde2ee"></div>
<div class="a" style="left:2194px;top:792px;width:18px;height:18px;background:#dde2ee"></div>
<div class="a" style="left:2212px;top:792px;width:18px;height:18px;background:#e7f0fc"></div>
<div class="a" style="left:2158px;top:810px;width:18px;height:18px;background:#e1ebf7"></div>
<div class="a" style="left:2176px;top:810px;width:18px;height:18px;background:#aeb4c2"></div>
<div class="a" style="left:2194px;top:810px;width:18px;height:18px;background:#aeb4c2"></div>
<div class="a" style="left:2212px;top:810px;width:18px;height:18px;background:#e1ebf7"></div>
<div class="a" style="left:2158px;top:828px;width:18px;height:18px;background:#fcfdfe"></div>
<div class="a" style="left:2176px;top:828px;width:18px;height:18px;background:#e8ecf4"></div>
<div class="a" style="left:2194px;top:828px;width:18px;height:18px;background:#e8ecf4"></div>
<div class="a" style="left:2212px;top:828px;width:18px;height:18px;background:#fcfdfe"></div>
<div class="a" style="left:2158px;top:846px;width:18px;height:18px;background:#f7f7f7"></div>
<div class="a" style="left:2176px;top:846px;width:18px;height:18px;background:#c0c0c0"></div>
<div class="a" style="left:2194px;top:846px;width:18px;height:18px;background:#c0c0c0"></div>
<div class="a" style="left:2212px;top:846px;width:18px;height:18px;background:#f7f7f7"></div>
<div class="a" style="left:2158px;top:864px;width:18px;height:18px;background:#fdfdfe"></div>
<div class="a" style="left:2176px;top:864px;width:18px;height:18px;background:#eceef4"></div>
<div class="a" style="left:2194px;top:864px;width:18px;height:18px;background:#eceef4"></div>
<div class="a" style="left:2212px;top:864px;width:18px;height:18px;background:#fdfdfe"></div>
<div class="a" style="left:2158px;top:882px;width:18px;height:18px;background:#e2ebf8"></div>
<div class="a" style="left:2176px;top:882px;width:18px;height:18px;background:#b4bac8"></div>
<div class="a" style="left:2194px;top:882px;width:18px;height:18px;background:#b4bac8"></div>
<div class="a" style="left:2212px;top:882px;width:18px;height:18px;background:#e2ebf8"></div>
<div class="a" style="left:2158px;top:900px;width:18px;height:18px;background:#e5eefa"></div>
<div class="a" style="left:2176px;top:900px;width:18px;height:18px;background:#ccd0dc"></div>
<div class="a" style="left:2194px;top:900px;width:18px;height:18px;background:#ccd0dc"></div>
<div class="a" style="left:2212px;top:900px;width:18px;height:18px;background:#e5eefa"></div>
<div class="a" style="left:2356px;top:684px;width:18px;height:18px;background:#f8f8f8"></div>
<div class="a" style="left:2374px;top:684px;width:18px;height:18px;background:#dedede"></div>
<div class="a" style="left:2392px;top:684px;width:18px;height:18px;background:#c8c8c8"></div>
<div class="a" style="left:2410px;top:684px;width:18px;height:18px;background:#f8f8f8"></div>
<div class="a" style="left:2356px;top:702px;width:18px;height:18px;background:#fcfcfc"></div>
<div class="a" style="left:2374px;top:702px;width:18px;height:18px;background:#efefef"></div>
<div class="a" style="left:2392px;top:702px;width:18px;height:18px;background:#e4e4e4"></div>
<div class="a" style="left:2410px;top:702px;width:18px;height:18px;background:#fcfcfc"></div>
<div class="a" style="left:2356px;top:720px;width:18px;height:18px;background:#e3ecf8"></div>
<div class="a" style="left:2374px;top:720px;width:18px;height:18px;background:#ced5e2"></div>
<div class="a" style="left:2392px;top:720px;width:18px;height:18px;background:#bcc2d0"></div>
<div class="a" style="left:2410px;top:720px;width:18px;height:18px;background:#e3ecf8"></div>
<div class="a" style="left:2356px;top:738px;width:18px;height:18px;background:#e4edf9"></div>
<div class="a" style="left:2374px;top:738px;width:18px;height:18px;background:#d5dbe7"></div>
<div class="a" style="left:2392px;top:738px;width:18px;height:18px;background:#c8ccd8"></div>
<div class="a" style="left:2410px;top:738px;width:18px;height:18px;background:#e4edf9"></div>
<div class="a" style="left:2356px;top:756px;width:18px;height:18px;background:#fcfcfc"></div>
<div class="a" style="left:2374px;top:756px;width:18px;height:18px;background:#eeeeee"></div>
<div class="a" style="left:2392px;top:756px;width:18px;height:18px;background:#e2e2e2"></div>
<div class="a" style="left:2410px;top:756px;width:18px;height:18px;background:#fcfcfc"></div>
<div class="a" style="left:2356px;top:774px;width:18px;height:18px;background:#f9f9f9"></div>
<div class="a" style="left:2374px;top:774px;width:18px;height:18px;background:#e0e0e0"></div>
<div class="a" style="left:2392px;top:774px;width:18px;height:18px;background:#cccccc"></div>
<div class="a" style="left:2410px;top:774px;width:18px;height:18px;background:#f9f9f9"></div>
<div class="a" style="left:2356px;top:792px;width:18px;height:18px;background:#e7f0fc"></div>
<div class="a" style="left:2374px;top:792px;width:18px;height:18px;background:#e1e8f4"></div>
<div class="a" style="left:2392px;top:792px;width:18px;height:18px;background:#dde2ee"></div>
<div class="a" style="left:2410px;top:792px;width:18px;height:18px;background:#e7f0fc"></div>
<div class="a" style="left:2356px;top:810px;width:18px;height:18px;background:#e1ebf7"></div>
<div class="a" style="left:2374px;top:810px;width:18px;height:18px;background:#c5cdda"></div>
<div class="a" style="left:2392px;top:810px;width:18px;height:18px;background:#aeb4c2"></div>
<div class="a" style="left:2410px;top:810px;width:18px;height:18px;background:#e1ebf7"></div>
<div class="a" style="left:2356px;top:828px;width:18px;height:18px;background:#fcfdfe"></div>
<div class="a" style="left:2374px;top:828px;width:18px;height:18px;background:#f1f4f8"></div>
<div class="a" style="left:2392px;top:828px;width:18px;height:18px;background:#e8ecf4"></div>
<div class="a" style="left:2410px;top:828px;width:18px;height:18px;background:#fcfdfe"></div>
<div class="a" style="left:2356px;top:846px;width:18px;height:18px;background:#f7f7f7"></div>
<div class="a" style="left:2374px;top:846px;width:18px;height:18px;background:#d9d9d9"></div>
<div class="a" style="left:2392px;top:846px;width:18px;height:18px;background:#c0c0c0"></div>
<div class="a" style="left:2410px;top:846px;width:18px;height:18px;background:#f7f7f7"></div>
<div class="a" style="left:2356px;top:864px;width:18px;height:18px;background:#fdfdfe"></div>
<div class="a" style="left:2374px;top:864px;width:18px;height:18px;background:#f4f5f8"></div>
<div class="a" style="left:2392px;top:864px;width:18px;height:18px;background:#eceef4"></div>
<div class="a" style="left:2410px;top:864px;width:18px;height:18px;background:#fdfdfe"></div>
<div class="a" style="left:2356px;top:882px;width:18px;height:18px;background:#e2ebf8"></div>
<div class="a" style="left:2374px;top:882px;width:18px;height:18px;background:#c9d0de"></div>
<div class="a" style="left:2392px;top:882px;width:18px;height:18px;background:#b4bac8"></div>
<div class="a" style="left:2410px;top:882px;width:18px;height:18px;background:#e2ebf8"></div>
<div class="a" style="left:2356px;top:900px;width:18px;height:18px;background:#e5eefa"></div>
<div class="a" style="left:2374px;top:900px;width:18px;height:18px;background:#d7deea"></div>
<div class="a" style="left:2392px;top:900px;width:18px;height:18px;background:#ccd0dc"></div>
<div class="a" style="left:2410px;top:900px;width:18px;height:18px;background:#e5eefa"></div>
<!--/DB-->
<div class="a" style="left:822px;top:636px;width:70px;height:43px;overflow:hidden"><div class="t tg" style="left:-6px;top:10px">单位</div></div>
<div class="t tg" style="left:956px;top:646px">物料组</div>
<div class="t tg" style="left:1132px;top:646px">中转和转移</div>
<div class="t tg" style="left:1344px;top:646px">质量检验</div>
<div class="t tg" style="left:1556px;top:646px">已冻结</div>
<div class="t tg" style="left:1744px;top:646px">在途库存</div>
<div class="t tg" style="left:1913px;top:646px">在转储中<span style="font-family:'Liberation Sans',sans-serif">(</span>工厂<span style="font-family:'Liberation Sans',sans-serif">)</span></div>
<div class="t tg" style="left:2169px;top:646px">退货</div>
<div class="t tg" style="left:2309px;top:646px">限制使用的库存</div>
<div class="a" style="left:822px;top:1048px;width:1672px;height:30px;background:#efefef"></div>
<div class="a" style="left:1732px;top:1048px;width:728px;height:30px;background:#dbdbdb"></div>
<svg class="a" style="left:832px;top:1056px" width="14" height="14"><path d="M14 0V14L0 7Z" fill="#000"/></svg>
<svg class="a" style="left:2470px;top:1056px" width="14" height="14"><path d="M0 0V14L14 7Z" fill="#000"/></svg>
<div class="a" style="left:2400px;top:1092px;width:80px;height:52px;background:#dcdcdc;border-radius:8px"></div>
<div class="t tg" style="left:2415px;top:1106px">关闭</div>
<div class="a" style="left:818px;top:636px;width:4px;height:526px;background:#2a78b4"></div>
<div class="a" style="left:2494px;top:636px;width:4px;height:526px;background:#2a78b4"></div>
<div class="a" style="left:818px;top:1158px;width:1680px;height:4px;background:#2a78b4"></div>
<div class="a" style="left:818px;top:588px;width:4px;height:48px;background:linear-gradient(#2c7ab4,#2a78b4)"></div>
<svg class="a" style="left:828px;top:597px" width="32" height="32" viewBox="0 0 32 32">
 <defs><radialGradient id="pg" cx="0.45" cy="0.4" r="0.6"><stop offset="0" stop-color="#3ab8e8"/><stop offset="0.6" stop-color="#1a6aa0"/><stop offset="1" stop-color="#0a2a50"/></radialGradient>
 <linearGradient id="py" x1="0" y1="1" x2="1" y2="0"><stop offset="0" stop-color="#f8c030"/><stop offset="1" stop-color="#ff8020"/></linearGradient></defs>
 <circle cx="16" cy="16" r="15" fill="url(#pg)"/>
 <path d="M9 29 L12 6 H22 A7 7 0 0 1 22 20 H16 L14 29 Z M16 11 L15 16 H21 A2.5 2.5 0 0 0 21 11 Z" fill="url(#py)"/>
</svg>
<div class="t" style="left:867px;top:602px;color:#fff;font-size:24px;letter-spacing:-1px">SAP库存数据</div>
<svg class="a" style="left:2418px;top:600px" width="25" height="25" viewBox="0 0 25 25"><rect x="2.5" y="2.5" width="20" height="20" fill="none" stroke="#0f4a80" stroke-width="5"/></svg>
<svg class="a" style="left:2459px;top:600px" width="26" height="25" viewBox="0 0 26 25"><path d="M3 3 L23 22 M23 3 L3 22" stroke="#0f4a80" stroke-width="6"/></svg>
</body></html>
